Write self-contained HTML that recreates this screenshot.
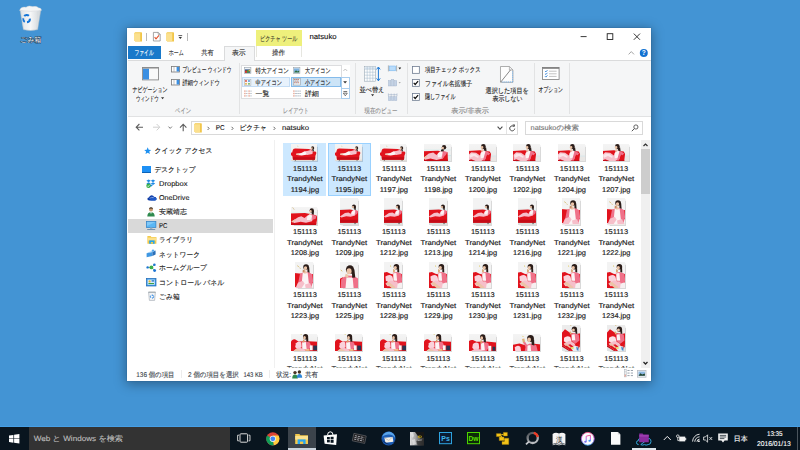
<!DOCTYPE html>
<html lang="ja">
<head>
<meta charset="utf-8">
<title>natsuko</title>
<style>html,body{margin:0;padding:0}
body{width:800px;height:450px;overflow:hidden;position:relative;background:#4394D4;font-family:"Liberation Sans",sans-serif}
div,svg{position:absolute;display:block}
svg{overflow:visible}
#tx text{font-family:"Liberation Sans",sans-serif;white-space:pre;text-rendering:geometricPrecision}
</style>
</head>
<body>
<svg width="0" height="0" style="left:0;top:0"><defs>
<linearGradient id="wl" x1="0" y1="0" x2="0" y2="1"><stop offset="0" stop-color="#f5f5f5"/><stop offset="1" stop-color="#e9e8e7"/></linearGradient>
<symbol id="tA" viewBox="0 0 26.6 17"><rect width="26.6" height="17" fill="url(#wl)"/><rect y="15" width="26.6" height="2" fill="#e2ddd7"/><path d="M7 2.4 L7.6 3.6" stroke="#d9c58a" stroke-width=".5"/>
<path d="M.2 10.2 Q0 8.4 2 8.6 L2.6 6.6 Q2.8 4.8 5.2 5 L17.4 5.4 Q20.4 5.8 21.6 7.6 L23.2 7.6 Q25 7.4 24.6 9.4 L23.8 11.6 L23.4 15.2 L2.8 15.2 L2.4 12.2Z" fill="#e1131d"/>
<path d="M2.6 13 L23.6 13 L23.4 15.2 L2.8 15.2Z" fill="#c50c17"/><path d="M5 15.2 L5 16 M21.6 15.2 L21.6 16" stroke="#4a3a30" stroke-width=".8"/>
<path d="M5.8 9.8 L10.6 9 L13.6 7.4 L16 7.6 L16.6 10.4 L11 11.2 L6.4 10.8Z" fill="#fbf4f5"/><path d="M14.4 7.6 L19.4 6.4 L21.4 7.4 L21 10 L16 10.8Z" fill="#f6bfca"/>
<path d="M5.6 9.8 L8.4 9.6 L8.6 10.6 L6 10.8Z" fill="#ecc4a8"/>
<circle cx="21.2" cy="4.5" r="1.5" fill="#2b1d19"/><circle cx="20.5" cy="4.9" r=".95" fill="#ecc4a8"/><path d="M21.4 4.2 L22.6 7.6 L21 7.2Z" fill="#2b1d19"/></symbol>

<symbol id="tB" viewBox="0 0 26.6 17"><rect width="26.6" height="17" fill="url(#wl)"/><rect y="5.9" width="26.6" height=".8" fill="#d9eeee"/><rect x="22.8" y="11" width="3.8" height="6" fill="#e6eaea"/><rect x="22.8" y="11" width="3.8" height=".8" fill="#cfe4e6"/>
<path d="M0 7.4 L14 6.9 L23 8.4 L23.4 16.6 L0 16.6Z" fill="#e1131d"/><path d="M0 15.2 L23.2 15.2 L23.2 16.6 L0 16.6Z" fill="#c50c17"/>
<path d="M.6 13.4 L5.4 9.4 L9.6 8.6 L12.6 10.8 L15.6 7.8 L19.6 7 L21.4 9 L18.6 14 L12.6 15.4 L7 14 L2 15.2Z" fill="#f6bfca"/><path d="M14.2 9.2 L17.2 7.2 L18.8 8.8 L17 13 L13.8 12.8Z" fill="#fbf4f5"/>
<path d="M18.6 7.2 L22.8 8.2 L21.6 10.6 L17.6 14.4Z" fill="#ef7189"/>
<path d="M.4 13.4 L3.4 11.4 L4.2 12.4 L1.2 14.6Z" fill="#ecc4a8"/>
<circle cx="19.7" cy="3.8" r="2.05" fill="#2b1d19"/><circle cx="18.5" cy="4.5" r="1.15" fill="#ecc4a8"/><path d="M16.8 6 L19 5.4 L19.6 7.4 L17 7.6Z" fill="#2b1d19"/></symbol>

<symbol id="tC" viewBox="0 0 26.6 17"><rect width="26.6" height="17" fill="url(#wl)"/><rect x="20" y="11.4" width="6.6" height="1" fill="#d6e8ea"/><rect x="20" y="12.4" width="6.6" height="4.6" fill="#e9e7e5"/>
<path d="M0 7.2 L11 6.6 L20.4 7.8 L21.6 10 L20.8 16.6 L0 16.6Z" fill="#e1131d"/><path d="M0 15.4 L20.8 15.4 L20.8 16.6 L0 16.6Z" fill="#c50c17"/>
<path d="M.4 10.6 L3 8.4 L7.6 8.8 L11.2 11.2 L12.4 8 L15.6 6.6 L17.8 8.6 L16.2 14.4 L12 16.5 L7 16.3 L3 14.6 L.6 15.6Z" fill="#f6bfca"/><path d="M1 11.6 L3.4 9.6 L7 10 L10.4 12.6 L9 13.4 L5.6 11.8 L2 13.4Z" fill="#fbe4e9"/>
<path d="M11.8 9.4 L15 6.8 L16.8 8.4 L15.2 13.4 L12 13.8Z" fill="#fbf4f5"/><path d="M16.6 6.8 L20.8 9.4 L19.2 11 L17.8 10.4 L15.8 15.8 L14 15.8Z" fill="#ef7189"/>
<circle cx="14.4" cy="3.2" r="2.2" fill="#2b1d19"/><circle cx="13.2" cy="4" r="1.25" fill="#ecc4a8"/><path d="M14.6 3.8 L17 4 L17.4 7.4 L15 6.8Z" fill="#2b1d19"/><path d="M12.4 5.8 L14 5.4 L14.2 7.8 L12.6 8Z" fill="#ecc4a8"/></symbol>

<symbol id="tD" viewBox="0 0 26.6 17.6"><rect width="26.6" height="17.6" fill="url(#wl)"/><path d="M2.4 1.2 L4 3.4" stroke="#cdb47c" stroke-width=".6"/><rect y="5.8" width="26.6" height=".7" fill="#ddf0f0"/>
<path d="M.2 6.8 L14 6.4 L22.6 8 L26.2 9.4 L25.4 12 L24.4 17.3 L.2 17.3Z" fill="#e1131d"/><path d="M.2 15.8 L24.8 15.8 L24.4 17.3 L.2 17.3Z" fill="#c50c17"/>
<path d="M1.6 14 L7.6 10.2 L10.6 9.2 L13.6 10.8 L17 8.2 L20.6 7.4 L22.6 9.4 L20.6 13.8 L15 15.2 L10 14.2 L4 15.4Z" fill="#f6bfca"/><path d="M16.2 9.4 L19.4 7.6 L20.6 9.2 L19 12.8 L15.8 12.8Z" fill="#fbf4f5"/>
<path d="M20.6 7.6 L24.8 9 L24 11.6 L20.8 12.8Z" fill="#ef7189"/><path d="M1.2 14 L4.6 12 L5.4 13 L2.2 15Z" fill="#ecc4a8"/>
<circle cx="20.4" cy="4" r="2" fill="#2b1d19"/><circle cx="19.3" cy="4.7" r="1.15" fill="#ecc4a8"/><path d="M20.4 4.4 L22.4 4.6 L22.2 8 L20.4 7.4Z" fill="#2b1d19"/><path d="M17.6 6.6 L18.8 6.2 L19 8 L17.8 8.2Z" fill="#ecc4a8"/></symbol>

<symbol id="tE" viewBox="0 0 18.2 26.4"><rect width="18.2" height="26.4" fill="#f3f3f3"/><rect y="11" width="18.2" height=".8" fill="#dcefef"/><rect y="23.6" width="18.2" height="2.8" fill="#dcdedb"/>
<path d="M0 12.2 L10 11.6 L17.6 13 L17.8 16.6 L17 24 L.2 24Z" fill="#e1131d"/><path d="M.2 21.4 L17.2 21.4 L17 24 L.2 24Z" fill="#c50c17"/><path d="M14.6 24 L14.6 25.4" stroke="#333" stroke-width=".8"/>
<path d="M.8 18.2 L5.4 15 L8.6 14.6 L10.6 15.8 L12 12.8 L14.4 11.8 L15.8 13.4 L14.6 17.4 L10.6 18.6 L6.6 18 L2.2 19.2Z" fill="#f6bfca"/><path d="M11.6 13.8 L13.8 12.2 L14.8 13.4 L13.8 16.4 L11.4 16.4Z" fill="#fbf4f5"/>
<path d="M14.8 12.2 L17.4 13.6 L16.4 16 L14.8 16.8Z" fill="#ef7189"/>
<circle cx="13.6" cy="8.8" r="1.8" fill="#2b1d19"/><circle cx="12.7" cy="9.4" r="1.05" fill="#ecc4a8"/><path d="M13.8 9 L15.4 9.2 L15.2 12.2 L13.8 11.8Z" fill="#2b1d19"/></symbol>

<symbol id="tF" viewBox="0 0 18.2 26.4"><rect width="18.2" height="26.4" fill="#f3f3f3"/><path d="M3 4.4 L4.4 5.4 M5 6.4 L6 7" stroke="#cfae52" stroke-width=".7"/>
<path d="M0 11.2 L7.4 12 L7.4 24 L0 24.6Z" fill="#e1131d"/><path d="M12 13.4 L18.2 12 L18.2 20.4 L12 22Z" fill="#e1131d"/><rect y="24.4" width="18.2" height="2" fill="#f0e6e6"/>
<path d="M5.4 12.2 L8.8 10.2 L13 10.4 L16.6 12.4 L17.4 19 L15.6 25.4 L2.4 25.4 L4.2 18.6Z" fill="#ef7189"/>
<path d="M8 10.8 L12.4 10.8 L13.4 20 L14.2 25.4 L6 25.4 L7.2 19Z" fill="#fbf4f5"/><path d="M1.4 25.4 L3.6 20.4 L8 18.4 L9.6 21 L7 25.4Z" fill="#f6bfca"/><path d="M10 22 L14.6 20.6 L16.4 25.4 L10.6 25.4Z" fill="#f6bfca"/>
<path d="M8.8 9 L11.4 9 L11.4 11.6 L9 11.6Z" fill="#ecc4a8"/><circle cx="11" cy="5.6" r="2.6" fill="#2b1d19"/><ellipse cx="10.5" cy="6.6" rx="1.5" ry="1.8" fill="#ecc4a8"/><path d="M12.2 5.2 L13.8 5.8 L14.2 11 L12.2 10.2Z" fill="#2b1d19"/><path d="M8 8 L9.8 8.6 L9.4 10.8 L7.8 10.2Z" fill="#c58d62"/></symbol>

<symbol id="tG" viewBox="0 0 18.2 26.4"><rect width="18.2" height="26.4" fill="#f3f3f3"/><path d="M1.6 8.4 L3 9.6" stroke="#cfae52" stroke-width=".7"/>
<path d="M0 17 L4 15 L4 26.4 L0 26.4Z" fill="#e1131d"/>
<path d="M2 17 L6.6 13.6 L13 13.8 L17.4 16.4 L18.2 26.4 L1.4 26.4Z" fill="#ef7189"/><path d="M6.8 15.4 L12.4 15.4 L13.4 26.4 L5.8 26.4Z" fill="#fbf4f5"/>
<ellipse cx="10" cy="8" rx="3.7" ry="4.1" fill="#2b1d19"/><ellipse cx="9.2" cy="9.6" rx="2.3" ry="2.7" fill="#ecc4a8"/><path d="M11.6 7 L14 8 L14.8 15.4 L12 15.8Z" fill="#2b1d19"/><path d="M6 12 L9 13 L8 16 L5.4 14.8Z" fill="#ecc4a8"/></symbol>

<symbol id="tH" viewBox="0 0 18.2 26.4"><rect width="18.2" height="26.4" fill="#f3f3f3"/><path d="M6.4 4.4 L7.4 5.2" stroke="#dcc24a" stroke-width=".8"/>
<path d="M0 11 L3.6 10.2 L6.8 12 L12 13 L18.2 12 L18.2 21 L14 26.4 L0 26.4Z" fill="#e1131d"/>
<path d="M8.8 11 L12.6 10.2 L16.6 11.8 L17.6 18.4 L15.6 22 L10.8 19.6Z" fill="#ef7189"/><path d="M9.4 11.4 L12.2 11.2 L12.8 18.6 L9.4 18.6Z" fill="#fbf4f5"/>
<path d="M2.2 14.6 Q5.6 11.6 8.6 14.4 L9.6 19 L6.6 20.6 L2.6 18.6Z" fill="#fad2db"/>
<path d="M2.2 21 L7 18.2 L12.6 19.4 L14.8 23 L12.4 26.2 L8.4 23.4 L4 23.6Z" fill="#f6bfca"/><path d="M2.6 20.8 L5.2 19.4 L11.2 24.4 L11 26.4 L8.8 26.2Z" fill="#ecc4a8"/>
<path d="M13.4 21 L18.2 19.6 L18.2 26.4 L12.6 26.4Z" fill="#f6f0f1"/>
<circle cx="12.2" cy="5.4" r="2.5" fill="#2b1d19"/><ellipse cx="11.2" cy="6.3" rx="1.4" ry="1.7" fill="#ecc4a8"/><path d="M13 5 L14.6 5.6 L14.8 10.8 L13 10.2Z" fill="#2b1d19"/><path d="M9.2 7.6 L10.8 8.4 L10.6 10.8 L9.2 10.4Z" fill="#d9a066"/></symbol>

<symbol id="tI" viewBox="0 0 26.6 17"><rect width="26.6" height="17" fill="url(#wl)"/><path d="M10.2 1 L10.8 1.8" stroke="#dcc24a" stroke-width=".6"/>
<path d="M.4 10 Q.8 5.6 4.6 5.6 L8 7.6 L17 7.4 L26.4 8 L26.4 16.6 L.4 16.6Z" fill="#e1131d"/>
<path d="M5.6 9.2 Q8 6.6 10.6 8.6 L11 13 L7 14.8 L4.8 12.6Z" fill="#fad2db"/>
<path d="M11 8.4 L14.4 7.4 L18.6 8.6 L20 12 L17 15.6 L11.4 15.6Z" fill="#ef7189"/><path d="M11.4 8.6 L14.8 8.2 L15.6 14.6 L11.6 14.8Z" fill="#fbf4f5"/>
<path d="M3 16.4 L7.6 13.2 L12 14 L15 15.6 L13.6 16.8 L3 16.8Z" fill="#f6bfca"/><path d="M3.4 15.8 L6.4 14 L11.6 16.8 L5 16.8Z" fill="#ecc4a8"/>
<rect x="21.8" y="11.4" width="3.6" height="4.2" fill="#2a3652"/><rect x="18.6" y="11.2" width="2.6" height="4.4" fill="#f6f6f6"/><path d="M14.6 14.8 L18.4 14.8 L18.4 16 L14.6 16Z" fill="#f0d890"/>
<circle cx="14.6" cy="3.4" r="2.4" fill="#2b1d19"/><ellipse cx="13.6" cy="4.2" rx="1.25" ry="1.55" fill="#ecc4a8"/><path d="M15.2 3.2 L17 3.8 L17.2 8 L15.2 7.6Z" fill="#2b1d19"/><path d="M12.2 5.8 L13.6 6.4 L13.4 8.6 L12 8.4Z" fill="#d9a066"/></symbol>

<symbol id="tI2" viewBox="0 0 26.6 17"><rect width="26.6" height="17" fill="url(#wl)"/>
<path d="M0 9 Q.8 6 4.6 6.4 L8 8 L17 7.6 L26.6 8.6 L26.6 16.6 L0 16.6Z" fill="#e1131d"/>
<path d="M4.6 10 Q7.4 7.4 10 9.6 L10.6 14 L6.4 15.8 L4 13.4Z" fill="#fad2db"/>
<path d="M11.6 9 L15 7.8 L19.2 9.4 L19.8 13 L17 16.6 L11.4 16.6Z" fill="#ef7189"/><path d="M12.2 9.4 L15 8.8 L15.8 15.6 L12.4 15.8Z" fill="#fbf4f5"/>
<path d="M2 16.8 L7 14 L12 15 L14 16.8Z" fill="#f6bfca"/>
<rect x="19" y="11.6" width="2.8" height="4.6" fill="#f6f6f6"/><rect x="23" y="12.4" width="2.6" height="3.6" fill="#2a3652"/>
<circle cx="13.8" cy="3.6" r="2.5" fill="#2b1d19"/><ellipse cx="12.9" cy="4.6" rx="1.3" ry="1.6" fill="#ecc4a8"/><path d="M14.6 3.6 L16.6 4.4 L16.8 8.6 L14.8 8.2Z" fill="#2b1d19"/><path d="M11.8 6.4 L13.2 7 L13 9.4 L11.6 9.2Z" fill="#d9a066"/></symbol>

<symbol id="tI3" viewBox="0 0 26.6 17"><rect width="26.6" height="17" fill="url(#wl)"/><path d="M8.8 2.6 L9.8 3.6" stroke="#dcc24a" stroke-width=".7"/>
<path d="M0 10.6 L6 9.6 L14 11.8 L20 9.8 L26.6 10.4 L26.6 16.6 L0 16.6Z" fill="#e1131d"/>
<path d="M1.6 13 Q4.4 10.2 7 12.6 L7.6 16.6 L2.2 16.6Z" fill="#fad2db"/>
<path d="M12 11 L16 9.4 L21.8 11 L23.2 16.6 L11 16.6Z" fill="#ef7189"/><path d="M13.6 11.2 L16.4 10.8 L17 16.6 L13.4 16.6Z" fill="#fbf4f5"/>
<circle cx="16.4" cy="5" r="3.2" fill="#2b1d19"/><ellipse cx="15.1" cy="6.2" rx="1.75" ry="2.15" fill="#ecc4a8"/><path d="M17.4 5 L19.8 6 L20 11.4 L17.4 10.6Z" fill="#2b1d19"/><path d="M8.4 5.4 L10.6 5 L11.4 8.4 L9.4 9Z" fill="#dfb07a"/><path d="M9.4 8.6 L11.4 8.2 L13.6 11.6 L12 12.6Z" fill="#ef7189"/></symbol>

<symbol id="tJ" viewBox="0 0 18.2 26.4"><rect width="18.2" height="26.4" fill="#ececec"/><rect y="19" width="18.2" height="7.4" fill="#dfe3e4"/><path d="M8 0 L9 1.6" stroke="#cfae52" stroke-width=".8"/>
<path d="M.2 19.2 L.2 9 L3.6 4.8 L8.6 8.4 L14 9.4 L17.8 8.6 L17.8 18 L14.6 24 L9.6 25.8Z" fill="#e1131d"/><path d="M.2 19.2 L9.6 25.8 L14.6 24 L17.8 18 L17.8 19.6 L14.8 25.2 L9.2 26.4 L.2 20.8Z" fill="#c50c17"/>
<path d="M9.2 9.6 L12.6 8.4 L16.2 10 L16.8 15.4 L13 18.4 L9.4 15.8Z" fill="#ef7189"/><path d="M9.8 10 L12.4 9.6 L13 15.2 L10 15.2Z" fill="#fbf4f5"/>
<path d="M2.8 12.8 Q5.8 10.2 8.6 12.4 L9.6 16.8 L5.8 18.6 L2.6 16.2Z" fill="#fbe3e8"/>
<path d="M2.4 18.4 L7.6 15.8 L12 17.8 L13.4 20.4 L10.6 20.6 L8.4 19 L4 20.4Z" fill="#f6bfca"/><path d="M2.6 18.6 L4.6 18 L9 21.6 L8.4 22.6Z" fill="#ecc4a8"/>
<path d="M9 22.4 L12 20.4 L15.6 21 L16.2 25.6 L11.2 25.8Z" fill="#e7eef2"/><path d="M8.6 22 L11.4 21.4 L11.8 23 L9.4 23.6Z" fill="#e8dc70"/><path d="M13.8 21.6 L15.6 22 L16 25 L14.4 24.6Z" fill="#4a86c8"/>
<circle cx="12.2" cy="4.8" r="2.4" fill="#2b1d19"/><ellipse cx="11.3" cy="5.6" rx="1.3" ry="1.5" fill="#ecc4a8"/><path d="M13 4.6 L14.6 5.2 L14.8 9.4 L13.2 8.8Z" fill="#2b1d19"/><path d="M7.6 7.2 L9 7 L9.8 9.4 L8.4 9.8Z" fill="#dfb07a"/></symbol>
</defs></svg>
<svg style="left:18px;top:4px" width="26" height="28" viewBox="0 0 26 28" >
<defs><linearGradient id="rb" x1="0" x2="1"><stop offset="0" stop-color="#dfe3e6"/><stop offset=".5" stop-color="#f6f7f8"/><stop offset="1" stop-color="#cfd4d8"/></linearGradient></defs>
<path d="M2.2 6.2 L22.8 6.2 L19.6 25.6 Q12.5 27.4 5.4 25.6 Z" fill="url(#rb)" stroke="#b9c0c6" stroke-width=".5"/>
<path d="M1.6 6.4 Q3 2.4 8 3.2 Q11 1 14.5 2.6 Q19 1.6 20.5 3.8 Q23.5 4 23.4 6.4 Q12.5 8.4 1.6 6.4Z" fill="#f4f5f6" stroke="#c9cdd1" stroke-width=".4"/>
<g fill="none" stroke="#1374d8" stroke-width="2"><path d="M6.2 12 A3.3 3.3 0 0 1 10.9 11.8"/><path d="M11.9 14.6 A3.3 3.3 0 0 1 9 18.2"/><path d="M6.8 17.8 A3.3 3.3 0 0 1 5.2 14.2"/></g><path d="M3.4 7.6 L5.6 24.6 M19.8 7.6 L18.6 24.8" stroke="#d5dade" stroke-width=".5" fill="none"/>
</svg>
<div style="left:127px;top:28px;width:524px;height:353.3px;background:#fff;box-shadow:0 0 0 .5px rgba(40,90,140,.42),0 2px 11px 1px rgba(0,0,0,.35)"></div>
<svg style="left:133.5px;top:32px" width="8" height="9.4" viewBox="0 0 7.6 9.2" preserveAspectRatio="none"><path d="M1 .2 L6.9 .2 Q7.6 .2 7.6 .9 L7.6 9.2 L1 9.2Z" fill="#f1c548"/><path d="M0 1.3 Q0 .7 .6 .7 L5.9 .7 L5.9 8.7 L0 8.7Z" fill="#fbe08e"/><path d="M0 1.3 Q0 .7 .6 .7 L5.9 .7 L5.9 1.5 L0 1.5Z" fill="#f7d572"/></svg>
<div style="left:146px;top:33px;width:0.8px;height:7.5px;background:#b9b9b9"></div>
<svg style="left:152.7px;top:32.3px" width="7.8" height="9.4" viewBox="0 0 7.8 9.4" ><path d="M.4 .4 L5.2 .4 L7.2 2.4 L7.2 9 L.4 9Z" fill="#fff" stroke="#7f7f7f" stroke-width=".7"/><path d="M5.2 .4 L5.2 2.4 L7.2 2.4" fill="none" stroke="#7f7f7f" stroke-width=".6"/><path d="M1.6 5.2 L3 6.8 L6 3.4" fill="none" stroke="#e5532d" stroke-width="1.1"/></svg>
<svg style="left:165.6px;top:32px" width="8" height="9.4" viewBox="0 0 7.6 9.2" preserveAspectRatio="none"><path d="M1 .2 L6.9 .2 Q7.6 .2 7.6 .9 L7.6 9.2 L1 9.2Z" fill="#f1c548"/><path d="M0 1.3 Q0 .7 .6 .7 L5.9 .7 L5.9 8.7 L0 8.7Z" fill="#fbe08e"/><path d="M0 1.3 Q0 .7 .6 .7 L5.9 .7 L5.9 1.5 L0 1.5Z" fill="#f7d572"/></svg>
<svg style="left:178px;top:35.4px" width="4.6" height="4.4" viewBox="0 0 4.6 4.4" ><path d="M.4 .6 L4.2 .6" stroke="#333" stroke-width=".8"/><path d="M.6 2 L4 2 L2.3 3.9Z" fill="#333"/></svg>
<div style="left:187.4px;top:33px;width:0.8px;height:7.5px;background:#b9b9b9"></div>
<svg style="left:578px;top:31px" width="66" height="12" viewBox="0 0 66 12" ><path d="M2.6 5.6 L8.6 5.6" stroke="#222" stroke-width=".9"/><rect x="29.2" y="2.7" width="5.6" height="5.8" fill="none" stroke="#222" stroke-width=".9"/><path d="M55.8 2.6 L62 8.8 M62 2.6 L55.8 8.8" stroke="#222" stroke-width=".9"/></svg>
<svg style="left:626px;top:48px" width="24" height="10" viewBox="0 0 24 10" ><path d="M2.6 6.4 L5.3 3.6 L8 6.4" fill="none" stroke="#9a9a9a" stroke-width=".9"/><circle cx="17.8" cy="5" r="4" fill="#1272d2"/><text x="17.8" y="7.4" font-size="6.6" font-weight="bold" fill="#fff" text-anchor="middle">?</text></svg>
<div style="left:256px;top:30px;width:46px;height:16px;background:#eef07c"></div>
<div style="left:128px;top:46px;width:32.6px;height:13.4px;background:#1979ca"></div>
<div style="left:127.6px;top:60px;width:523px;height:56.7px;background:#f5f6f7;border-top:.8px solid #dadbdc;border-bottom:.8px solid #e1e2e3;box-sizing:border-box"></div>
<div style="left:223.6px;top:46.2px;width:31px;height:14.6px;background:#f5f6f7;border:.8px solid #dadbdc;border-bottom:none;box-sizing:border-box"></div>
<div style="left:256px;top:46px;width:46px;height:11px;border-left:.8px solid #e6e6e0;border-right:.8px solid #e6e6e0;box-sizing:border-box"></div>
<svg style="left:141.6px;top:66.8px" width="17" height="13.6" viewBox="0 0 17 13.6" ><rect x=".5" y=".5" width="16" height="12.4" fill="#f9f9f9" stroke="#8a8a8a" stroke-width=".9"/><rect x="1" y="1.6" width="6" height="10.8" fill="#3b8fe2"/><rect x=".5" y=".3" width="16" height="1.2" fill="#8a8a8a"/></svg>
<svg style="left:161px;top:97.4px" width="3.4" height="2.4" viewBox="0 0 3.4 2.4" ><path d="M0 .2 L3.2 .2 L1.6 2.2Z" fill="#333"/></svg>
<svg style="left:171.2px;top:66.4px" width="9" height="6.4" viewBox="0 0 9 6.4" ><rect x=".4" y=".4" width="8.2" height="5.6" fill="#fff" stroke="#777" stroke-width=".8"/><rect x="5.6" y=".9" width="2.6" height="4.6" fill="#3b8fe2"/><path d="M3 .6 L3 5.8" stroke="#888" stroke-width=".5"/></svg>
<svg style="left:171.2px;top:79.2px" width="9" height="6.4" viewBox="0 0 9 6.4" ><rect x=".4" y=".4" width="8.2" height="5.6" fill="#fff" stroke="#777" stroke-width=".8"/><rect x="5.6" y=".9" width="2.6" height="4.6" fill="#3b8fe2"/><path d="M3 .6 L3 5.8" stroke="#888" stroke-width=".5"/></svg>
<div style="left:238.6px;top:62.5px;width:0.8px;height:51.5px;background:#e2e3e4"></div>
<div style="left:241.2px;top:64.8px;width:108.4px;height:34.6px;background:#fff;border:.8px solid #dcdddf;box-sizing:border-box"></div>
<div style="left:242.2px;top:76.6px;width:48px;height:10.8px;background:#e8f2fc;border:.7px solid #c4ddf5;box-sizing:border-box"></div>
<div style="left:291.2px;top:76.6px;width:49.6px;height:10.8px;background:#cce4f7;border:.7px solid #84bbeb;box-sizing:border-box"></div>
<svg style="left:244.4px;top:66.8px" width="7.2" height="7" viewBox="0 0 7.2 7" ><rect x=".3" y=".3" width="6.6" height="6.2" fill="#eef3f7" stroke="#9aa3ab" stroke-width=".6"/><rect x="1" y="2.4" width="5.2" height="3.4" fill="#2c4f86"/><rect x="1" y="3.6" width="2" height="2.2" fill="#d23b2a"/><rect x="3" y="3.2" width="1.6" height="2.6" fill="#4c9a3a"/><rect x="4.6" y="2.8" width="1.6" height="1.6" fill="#e8b530"/></svg>
<svg style="left:293px;top:66.8px" width="7.2" height="7" viewBox="0 0 7.2 7" ><rect x=".3" y=".3" width="6.6" height="6.2" fill="#eef3f7" stroke="#9aa3ab" stroke-width=".6"/><rect x="1" y="1.4" width="5.2" height="4" fill="#7fb2e0"/><path d="M1 5.4 L3 3.2 L4.4 4.4 L6.2 3.4 L6.2 5.4Z" fill="#2f6b3c"/></svg>
<svg style="left:244.4px;top:78.6px" width="7.2" height="7" viewBox="0 0 7.2 7" ><rect x=".3" y=".3" width="6.6" height="6.2" fill="#f4f6f8" stroke="#aab3bb" stroke-width=".6"/><circle cx="2" cy="2" r=".9" fill="#d8442c"/><circle cx="5" cy="2" r=".9" fill="#4b8fd8"/><circle cx="2" cy="4.8" r=".9" fill="#e3a52a"/><circle cx="5" cy="4.8" r=".9" fill="#5aa845"/></svg>
<svg style="left:293px;top:78.4px" width="7.6" height="7.4" viewBox="0 0 7.6 7.4" ><rect x=".3" y=".3" width="7" height="6.8" fill="#eceff2" stroke="#9aa3ab" stroke-width=".6"/><g fill="#d9846f"><rect x="1" y="1" width="1" height="1"/><rect x="3" y="1" width="1" height="1"/><rect x="5" y="1" width="1" height="1"/><rect x="2" y="2.6" width="1" height="1"/><rect x="4" y="2.6" width="1" height="1"/><rect x="1" y="4.2" width="1" height="1"/><rect x="3" y="4.2" width="1" height="1"/><rect x="5" y="4.2" width="1" height="1"/></g><g fill="#9fb4c8"><rect x="2" y="1" width="1" height="1"/><rect x="4" y="1" width="1" height="1"/><rect x="1" y="2.6" width="1" height="1"/><rect x="3" y="2.6" width="1" height="1"/><rect x="5" y="2.6" width="1" height="1"/><rect x="2" y="4.2" width="1" height="1"/><rect x="4" y="4.2" width="1" height="1"/></g></svg>
<svg style="left:244.2px;top:90px" width="8" height="7" viewBox="0 0 8 7" ><g fill="#e7a391"><rect x=".2" y=".4" width="1.4" height="1.4"/><rect x=".2" y="2.8" width="1.4" height="1.4"/><rect x=".2" y="5.2" width="1.4" height="1.4"/></g><g fill="#a9b4bf"><rect x="2.2" y=".6" width="1.2" height="1"/><rect x="2.2" y="3" width="1.2" height="1"/><rect x="2.2" y="5.4" width="1.2" height="1"/><rect x="4.4" y=".4" width="1.4" height="1.4" fill="#e7a391"/><rect x="4.4" y="2.8" width="1.4" height="1.4" fill="#e7a391"/><rect x="4.4" y="5.2" width="1.4" height="1.4" fill="#e7a391"/><rect x="6.4" y=".6" width="1.2" height="1"/><rect x="6.4" y="3" width="1.2" height="1"/><rect x="6.4" y="5.4" width="1.2" height="1"/></g></svg>
<svg style="left:292.8px;top:90px" width="8" height="7" viewBox="0 0 8 7" ><g fill="#e7a391"><rect x=".2" y=".4" width="1.4" height="1.4"/><rect x=".2" y="2.8" width="1.4" height="1.4"/><rect x=".2" y="5.2" width="1.4" height="1.4"/></g><g fill="#a9b4bf"><rect x="2.2" y=".6" width="1.6" height="1"/><rect x="2.2" y="3" width="1.6" height="1"/><rect x="2.2" y="5.4" width="1.6" height="1"/><rect x="4.4" y=".6" width="1.4" height="1"/><rect x="4.4" y="3" width="1.4" height="1"/><rect x="4.4" y="5.4" width="1.4" height="1"/><rect x="6.4" y=".6" width="1.4" height="1"/><rect x="6.4" y="3" width="1.4" height="1"/><rect x="6.4" y="5.4" width="1.4" height="1"/></g></svg>
<div style="left:341.2px;top:64.8px;width:8.4px;height:34.6px;background:#fff;border-left:.8px solid #dcdddf;box-sizing:border-box"></div>
<div style="left:341.2px;top:76.6px;width:8.4px;height:22.8px;border:.8px solid #a9cdee;box-sizing:border-box"></div>
<div style="left:341.2px;top:87.8px;width:8.4px;height:0.8px;background:#a9cdee"></div>
<svg style="left:343.2px;top:68.4px" width="4.6" height="4" viewBox="0 0 4.6 4" ><path d="M.4 3 L2.3 1 L4.2 3" fill="none" stroke="#b5b5b5" stroke-width=".8"/></svg>
<svg style="left:343.4px;top:80.8px" width="4.2" height="3" viewBox="0 0 4.2 3" ><path d="M.2 .3 L4 .3 L2.1 2.6Z" fill="#333"/></svg>
<svg style="left:343.2px;top:90.6px" width="4.6" height="6" viewBox="0 0 4.6 6" ><path d="M.4 .6 L4.2 .6" stroke="#444" stroke-width=".8"/><path d="M.3 2.2 L4.3 2.2 L2.3 4.8Z" fill="none" stroke="#444" stroke-width=".7"/></svg>
<div style="left:354.6px;top:62.5px;width:0.8px;height:51.5px;background:#e2e3e4"></div>
<svg style="left:363.6px;top:65.8px" width="17" height="16" viewBox="0 0 17 16" ><rect x=".4" y=".4" width="11.2" height="14.8" fill="#fdfdfd" stroke="#9aa8b4" stroke-width=".6"/><rect x=".7" y=".7" width="10.6" height="2.3" fill="#dfe9f2"/><path d="M.4 3.2 L11.6 3.2" stroke="#9fb6c9" stroke-width=".5"/><path d="M.4 6.2 L11.6 6.2" stroke="#9fb6c9" stroke-width=".5"/><path d="M.4 9.2 L11.6 9.2" stroke="#9fb6c9" stroke-width=".5"/><path d="M.4 12.2 L11.6 12.2" stroke="#9fb6c9" stroke-width=".5"/><path d="M3.2 .4 L3.2 15.2" stroke="#9fb6c9" stroke-width=".5"/><path d="M6 .4 L6 15.2" stroke="#9fb6c9" stroke-width=".5"/><path d="M8.8 .4 L8.8 15.2" stroke="#9fb6c9" stroke-width=".5"/><path d="M14.4 1.2 L14.4 14.6" stroke="#1f7ad6" stroke-width="1"/><path d="M12.6 3.4 L14.4 1 L16.2 3.4 M12.6 12.4 L14.4 14.8 L16.2 12.4" fill="none" stroke="#1f7ad6" stroke-width="1"/></svg>
<svg style="left:370.6px;top:94px" width="3.4" height="2.4" viewBox="0 0 3.4 2.4" ><path d="M0 .2 L3.2 .2 L1.6 2.2Z" fill="#333"/></svg>
<svg style="left:388px;top:65.4px" width="14" height="7" viewBox="0 0 14 7" ><path d="M.4 .4 L.4 6.4 M8.6 .4 L8.6 6.4" stroke="#8c959d" stroke-width=".7"/><rect x="1.4" y="1" width="6.2" height="4.8" fill="#b9dcfb" stroke="#6fb1ee" stroke-width=".5"/><path d="M10.4 2.6 L13.2 2.6 L11.8 4.4Z" fill="#222"/></svg>
<svg style="left:388px;top:79.4px" width="14" height="7.4" viewBox="0 0 14 7.4" ><g fill="#c4d3e6" stroke="#9fb0c8" stroke-width=".4"><rect x=".4" y="1.6" width="2.4" height="5.4"/><rect x="3.4" y=".4" width="2.4" height="6.6"/><rect x="6.4" y="1.6" width="2.4" height="5.4"/></g><path d="M10.6 3 L12.8 3 L11.7 4.4Z" fill="#aaa"/></svg>
<svg style="left:388px;top:92.6px" width="9.6" height="8" viewBox="0 0 9.6 8" ><path d="M.4 .4 L.4 3 M9 .4 L9 3 M.4 1.7 L9 1.7 M3.2 .6 L3.2 2.8 M6.2 .6 L6.2 2.8" stroke="#9fb0c8" stroke-width=".6" fill="none"/><g fill="#c4d3e6" stroke="#9fb0c8" stroke-width=".4"><rect x=".4" y="3.8" width="2.5" height="3.8"/><rect x="3.4" y="3.8" width="2.5" height="3.8"/><rect x="6.4" y="3.8" width="2.5" height="3.8"/></g></svg>
<div style="left:407.2px;top:62.5px;width:0.8px;height:51.5px;background:#e2e3e4"></div>
<svg style="left:412.2px;top:65.7px" width="7.8" height="7.8" viewBox="0 0 7.8 7.8" ><rect x=".45" y=".45" width="6.9" height="6.9" fill="#fff" stroke="#6f7c91" stroke-width=".8"/></svg>
<svg style="left:412.2px;top:79.2px" width="7.8" height="7.8" viewBox="0 0 7.8 7.8" ><rect x=".45" y=".45" width="6.9" height="6.9" fill="#fff" stroke="#6f7c91" stroke-width=".8"/><path d="M1.7 3.9 L3.2 5.5 L6.1 2.1" fill="none" stroke="#111" stroke-width="1.2"/></svg>
<svg style="left:412.2px;top:92.8px" width="7.8" height="7.8" viewBox="0 0 7.8 7.8" ><rect x=".45" y=".45" width="6.9" height="6.9" fill="#fff" stroke="#6f7c91" stroke-width=".8"/><path d="M1.7 3.9 L3.2 5.5 L6.1 2.1" fill="none" stroke="#111" stroke-width="1.2"/></svg>
<svg style="left:500.4px;top:65.8px" width="13.8" height="17" viewBox="0 0 13.8 17" ><path d="M.5 .5 L9.4 .5 L12.9 4 L12.9 16.3 L.5 16.3Z" fill="#fdfdfd" stroke="#8d8d8d" stroke-width=".7"/><path d="M9.4 .5 L9.4 4 L12.9 4" fill="none" stroke="#8d8d8d" stroke-width=".6"/><path d="M.8 16 L10.6 3.8" stroke="#555" stroke-width=".7"/><path d="M12.6 5.4 L12.6 16 M2.4 16 L12.6 16" stroke="#6cb4f5" stroke-width=".9" stroke-dasharray="1 .9"/></svg>
<div style="left:534.2px;top:62.5px;width:0.8px;height:51.5px;background:#e2e3e4"></div>
<svg style="left:542.4px;top:67px" width="17.6" height="13" viewBox="0 0 17.6 13" ><rect x=".5" y=".5" width="16.6" height="12" fill="#fff" stroke="#7d7d7d" stroke-width=".8"/><rect x=".5" y=".3" width="16.6" height="1.5" fill="#7d7d7d"/><g stroke="#a8a8a8" stroke-width=".7"><path d="M7 4.2 L14.6 4.2 M7 6.8 L14.6 6.8 M7 9.4 L14.6 9.4"/></g><g fill="none" stroke="#2b7fd6" stroke-width=".9"><path d="M3 4 L3.9 4.9 L5.4 3.2 M3 6.6 L3.9 7.5 L5.4 5.8 M3 9.2 L3.9 10.1 L5.4 8.4"/></g></svg>
<div style="left:569.2px;top:62.5px;width:0.8px;height:51.5px;background:#e2e3e4"></div>
<svg style="left:134.6px;top:123.4px" width="9" height="8.4" viewBox="0 0 9 8.4" ><path d="M8 4.2 L1.4 4.2 M4.4 1 L1.2 4.2 L4.4 7.4" fill="none" stroke="#5c5c5c" stroke-width="1.1"/></svg>
<svg style="left:151.8px;top:123.4px" width="9" height="8.4" viewBox="0 0 9 8.4" ><path d="M1 4.2 L7.6 4.2 M4.6 1 L7.8 4.2 L4.6 7.4" fill="none" stroke="#cfcfcf" stroke-width="1"/></svg>
<svg style="left:167.6px;top:126.2px" width="4.4" height="3.4" viewBox="0 0 4.4 3.4" ><path d="M.5 .6 L2.2 2.4 L3.9 .6" fill="none" stroke="#666" stroke-width=".9"/></svg>
<svg style="left:179px;top:123px" width="8.4" height="9" viewBox="0 0 8.4 9" ><path d="M4.2 8.2 L4.2 1.4 M1 4.6 L4.2 1.2 L7.4 4.6" fill="none" stroke="#5c5c5c" stroke-width="1.1"/></svg>
<div style="left:191.2px;top:121.2px;width:326.4px;height:13.4px;background:#fff;border:.8px solid #d9d9d9;box-sizing:border-box"></div>
<div style="left:505.8px;top:121.6px;width:0.8px;height:12.6px;background:#e4e4e4"></div>
<svg style="left:194px;top:122.6px" width="7.8" height="9.6" viewBox="0 0 7.6 9.2" preserveAspectRatio="none"><path d="M1 .2 L6.9 .2 Q7.6 .2 7.6 .9 L7.6 9.2 L1 9.2Z" fill="#f1c548"/><path d="M0 1.3 Q0 .7 .6 .7 L5.9 .7 L5.9 8.7 L0 8.7Z" fill="#fbe08e"/><path d="M0 1.3 Q0 .7 .6 .7 L5.9 .7 L5.9 1.5 L0 1.5Z" fill="#f7d572"/></svg>
<svg style="left:206.8px;top:125.6px" width="3" height="4.8" viewBox="0 0 3 4.8" ><path d="M.6 .8 L2.1 2.4 L.6 4" fill="none" stroke="#5a5a5a" stroke-width=".9"/></svg>
<svg style="left:230.6px;top:125.6px" width="3" height="4.8" viewBox="0 0 3 4.8" ><path d="M.6 .8 L2.1 2.4 L.6 4" fill="none" stroke="#5a5a5a" stroke-width=".9"/></svg>
<svg style="left:272.8px;top:125.6px" width="3" height="4.8" viewBox="0 0 3 4.8" ><path d="M.6 .8 L2.1 2.4 L.6 4" fill="none" stroke="#5a5a5a" stroke-width=".9"/></svg>
<svg style="left:497.4px;top:126px" width="6" height="4.4" viewBox="0 0 6 4.4" ><path d="M.6 .7 L3 3.3 L5.4 .7" fill="none" stroke="#444" stroke-width="1.1"/></svg>
<svg style="left:508.6px;top:124.2px" width="6.6" height="7.2" viewBox="0 0 6.6 7.2" ><path d="M5 2.6 A2.5 2.5 0 1 0 5.7 4.6" fill="none" stroke="#454545" stroke-width="1"/><path d="M3.4 .4 L5.9 .4 L5.9 3.1Z" fill="#454545"/></svg>
<div style="left:525.2px;top:121.2px;width:117.6px;height:13.4px;background:#fff;border:.8px solid #d9d9d9;box-sizing:border-box"></div>
<svg style="left:631px;top:124px" width="8" height="8" viewBox="0 0 8 8" ><circle cx="4.9" cy="3" r="2.1" fill="none" stroke="#555" stroke-width=".9"/><path d="M3.4 4.6 L.8 7.2" stroke="#555" stroke-width="1"/></svg>
<div style="left:128px;top:219.1px;width:144.5px;height:13.5px;background:#d9d9d9"></div>
<div style="left:274.4px;top:140px;width:0.7px;height:228px;background:#f0f0f0"></div>
<svg style="left:143.6px;top:146.6px" width="7.4" height="7.4" viewBox="0 0 7.4 7.4" ><path d="M3.7 .3 L4.7 2.7 L7.2 2.9 L5.3 4.6 L5.9 7.1 L3.7 5.8 L1.5 7.1 L2.1 4.6 L.2 2.9 L2.7 2.7Z" fill="#1e90f0"/></svg>
<div style="left:142.2px;top:166px;width:8.6px;height:6.8px;background:#1e90f5;border-bottom:.8px solid #0b63b8;box-sizing:border-box"></div>
<svg style="left:146.4px;top:179.4px" width="10" height="9" viewBox="0 0 10 9" ><g fill="#1f8ae6"><path d="M2.6 .4 L4.8 1.8 L2.6 3.2 L.4 1.8Z"/><path d="M7 .4 L9.2 1.8 L7 3.2 L4.8 1.8Z"/><path d="M2.6 3.2 L4.8 4.6 L2.6 6 L.4 4.6Z"/><path d="M7 3.2 L9.2 4.6 L7 6 L4.8 4.6Z"/><path d="M2.8 6.4 L4.8 5.2 L6.8 6.4 L4.8 7.8Z"/></g><circle cx="2.5" cy="6.7" r="2.2" fill="#35ad45"/><path d="M1.3 6.7 L2.2 7.7 L3.7 5.8" fill="none" stroke="#fff" stroke-width=".7"/></svg>
<svg style="left:146.6px;top:194.4px" width="10" height="7" viewBox="0 0 10 7" ><path d="M2.2 6.4 Q.2 6.4 .4 4.8 Q.6 3.6 2 3.6 Q2.4 1.4 4.6 1.2 Q6.4 1.2 7 2.8 Q9.4 2.8 9.6 4.8 Q9.6 6.4 8 6.4Z" fill="#0b3aa6"/><path d="M3.6 6.4 Q2.4 5 4 3.8 Q5 2.4 6.8 3 Q9.2 3.2 9.6 4.8 Q9.6 6.4 8 6.4Z" fill="#1f5ac8"/><path d="M2.6 4.4 Q4.4 2.6 6.6 3.6" fill="none" stroke="#e8effa" stroke-width=".5"/></svg>
<svg style="left:147.4px;top:206.6px" width="8" height="10" viewBox="0 0 8 10" ><circle cx="4" cy="2.6" r="2" fill="#c99a6e"/><path d="M2 2.2 Q2 .3 4 .3 Q6 .3 6 2.2 Q5 1.4 4 1.6 Q3 1.4 2 2.2Z" fill="#3a2a1e"/><path d="M.3 9.6 Q.3 5.2 4 5.2 Q7.7 5.2 7.7 9.6Z" fill="#2f8a4e"/><path d="M3 5.3 L4 7 L5 5.3Z" fill="#e9f2ea"/></svg>
<svg style="left:146.4px;top:221.4px" width="10.4" height="9.4" viewBox="0 0 10.4 9.4" ><rect x=".5" y=".5" width="9.4" height="6" fill="#5ab6f4" stroke="#2c7fc6" stroke-width=".7"/><path d="M1 1 L9.4 1 L1 5Z" fill="#8fd0fa" opacity=".7"/><rect x="1.2" y="8" width="8" height=".9" fill="#6b8aa8"/><rect x="4" y="6.6" width="2.4" height="1.4" fill="#9ab0c4"/></svg>
<svg style="left:146.6px;top:235.4px" width="10" height="9.4" viewBox="0 0 10 9.4" ><path d="M.4 1 L3.6 1 L4.4 2 L9.4 2 L9.4 8.8 L.4 8.8Z" fill="#f3c94a"/><rect x=".4" y="2.6" width="9" height="3" fill="#fbe08a"/><rect x="2.2" y="5.4" width="5.4" height="3.4" fill="#25a5ee"/><rect x="3.8" y="7" width="2.2" height="1.8" fill="#f3c94a"/></svg>
<svg style="left:146.4px;top:249.4px" width="10.4" height="9.4" viewBox="0 0 10.4 9.4" ><path d="M.6 4.2 L6.4 3 L6.4 7 L.6 8.2Z" fill="#3f97e2"/><path d="M6.4 3 L9.6 1.6 L9.6 5.6 L6.4 7Z" fill="#2a6fb8"/><path d="M.6 4.2 L3.8 2.8 L9.6 1.6 L6.4 3Z" fill="#8cc6f6"/><circle cx="7" cy="1.6" r="1.2" fill="#58a8ec"/></svg>
<svg style="left:146.4px;top:263px" width="11" height="9.6" viewBox="0 0 11 9.6" ><path d="M1.6 4.4 L5.6 4.4 M5.6 4.4 L8.4 1.8 M5.6 4.4 L8.6 7.4" stroke="#58a55a" stroke-width=".8"/><circle cx="1.6" cy="4.4" r="1.2" fill="#1c74d4"/><circle cx="5.4" cy="4.4" r="1.9" fill="#3cae4a"/><circle cx="8.4" cy="1.8" r="1.3" fill="#1c74d4"/><circle cx="8.6" cy="7.4" r="1.5" fill="#1c74d4"/></svg>
<svg style="left:146.4px;top:278px" width="10.4" height="8.4" viewBox="0 0 10.4 8.4" ><rect x=".4" y=".4" width="9.6" height="7.6" fill="#3d9be8" stroke="#1f68b4" stroke-width=".7"/><rect x="1.6" y="1.6" width="7.2" height="5.2" fill="#d8ecfb"/><circle cx="3.6" cy="3.4" r="1.1" fill="#e8b52c"/><rect x="5.6" y="2.2" width="2.6" height="1.4" fill="#2a78c8"/><rect x="2.4" y="5" width="5.6" height="1.1" fill="#3aa04a"/></svg>
<svg style="left:147.6px;top:291px" width="8" height="10" viewBox="0 0 8 10" ><path d="M.6 1.2 L7.4 1.2 L6.6 9.4 L1.4 9.4Z" fill="#f2f4f6" stroke="#9aa3ab" stroke-width=".6"/><path d="M.4 1.2 L7.6 1.2" stroke="#8a939b" stroke-width=".7"/><circle cx="4" cy="5.6" r="1.6" fill="none" stroke="#1f7fe0" stroke-width="1" stroke-dasharray="2.2 1.1"/></svg>
<div style="left:282.8px;top:142.7px;width:42.8px;height:53.4px;background:#cce8ff"></div>
<div style="left:328px;top:142.7px;width:42.8px;height:53.4px;background:#cce8ff;border:.8px solid #99d1ff;box-sizing:border-box"></div>
<div style="left:275px;top:140px;width:366px;height:227.6px;overflow:hidden"><div style="left:-275px;top:-140px;width:800px;height:450px"><div style="left:290.8px;top:144.3px;width:26.6px;height:17px;overflow:hidden;box-shadow:.5px .5px .9px rgba(0,0,0,.15)"><svg style="left:-.9px;top:-.9px;filter:blur(.5px)" width="28.4" height="18.8" viewBox="0 0 26.6 17" preserveAspectRatio="none"><use href="#tA"/></svg></div><div style="left:335.33px;top:144.3px;width:26.6px;height:17px;overflow:hidden;box-shadow:.5px .5px .9px rgba(0,0,0,.15)"><svg style="left:-.9px;top:-.9px;filter:blur(.5px)" width="28.4" height="18.8" viewBox="0 0 26.6 17" preserveAspectRatio="none"><use href="#tA"/></svg></div><div style="left:379.86px;top:144.3px;width:26.6px;height:17px;overflow:hidden;box-shadow:.5px .5px .9px rgba(0,0,0,.15)"><svg style="left:-.9px;top:-.9px;filter:blur(.5px)" width="28.4" height="18.8" viewBox="0 0 26.6 17" preserveAspectRatio="none"><use href="#tA"/></svg></div><div style="left:424.39px;top:144.3px;width:26.6px;height:17px;overflow:hidden;box-shadow:.5px .5px .9px rgba(0,0,0,.15)"><svg style="left:-.9px;top:-.9px;filter:blur(.5px)" width="28.4" height="18.8" viewBox="0 0 26.6 17" preserveAspectRatio="none"><use href="#tB"/></svg></div><div style="left:468.92px;top:144.3px;width:26.6px;height:17px;overflow:hidden;box-shadow:.5px .5px .9px rgba(0,0,0,.15)"><svg style="left:-.9px;top:-.9px;filter:blur(.5px)" width="28.4" height="18.8" viewBox="0 0 26.6 17" preserveAspectRatio="none"><use href="#tC"/></svg></div><div style="left:513.45px;top:144.3px;width:26.6px;height:17px;overflow:hidden;box-shadow:.5px .5px .9px rgba(0,0,0,.15)"><svg style="left:-.9px;top:-.9px;filter:blur(.5px)" width="28.4" height="18.8" viewBox="0 0 26.6 17" preserveAspectRatio="none"><use href="#tC"/></svg></div><div style="left:557.98px;top:144.3px;width:26.6px;height:17px;overflow:hidden;box-shadow:.5px .5px .9px rgba(0,0,0,.15)"><svg style="left:-.9px;top:-.9px;filter:blur(.5px)" width="28.4" height="18.8" viewBox="0 0 26.6 17" preserveAspectRatio="none"><use href="#tC"/></svg></div><div style="left:602.51px;top:144.3px;width:26.6px;height:17px;overflow:hidden;box-shadow:.5px .5px .9px rgba(0,0,0,.15)"><svg style="left:-.9px;top:-.9px;filter:blur(.5px)" width="28.4" height="18.8" viewBox="0 0 26.6 17" preserveAspectRatio="none"><use href="#tC"/></svg></div><div style="left:290.8px;top:207.0px;width:26.6px;height:17.6px;overflow:hidden;box-shadow:.5px .5px .9px rgba(0,0,0,.15)"><svg style="left:-.9px;top:-.9px;filter:blur(.5px)" width="28.4" height="19.4" viewBox="0 0 26.6 17.6" preserveAspectRatio="none"><use href="#tD"/></svg></div><div style="left:339.53px;top:198.2px;width:18.2px;height:26.4px;overflow:hidden;box-shadow:.5px .5px .9px rgba(0,0,0,.15)"><svg style="left:-.9px;top:-.9px;filter:blur(.5px)" width="20.0" height="28.2" viewBox="0 0 18.2 26.4" preserveAspectRatio="none"><use href="#tE"/></svg></div><div style="left:384.06px;top:198.2px;width:18.2px;height:26.4px;overflow:hidden;box-shadow:.5px .5px .9px rgba(0,0,0,.15)"><svg style="left:-.9px;top:-.9px;filter:blur(.5px)" width="20.0" height="28.2" viewBox="0 0 18.2 26.4" preserveAspectRatio="none"><use href="#tE"/></svg></div><div style="left:428.59px;top:198.2px;width:18.2px;height:26.4px;overflow:hidden;box-shadow:.5px .5px .9px rgba(0,0,0,.15)"><svg style="left:-.9px;top:-.9px;filter:blur(.5px)" width="20.0" height="28.2" viewBox="0 0 18.2 26.4" preserveAspectRatio="none"><use href="#tE"/></svg></div><div style="left:473.12px;top:198.2px;width:18.2px;height:26.4px;overflow:hidden;box-shadow:.5px .5px .9px rgba(0,0,0,.15)"><svg style="left:-.9px;top:-.9px;filter:blur(.5px)" width="20.0" height="28.2" viewBox="0 0 18.2 26.4" preserveAspectRatio="none"><use href="#tE"/></svg></div><div style="left:517.65px;top:198.2px;width:18.2px;height:26.4px;overflow:hidden;box-shadow:.5px .5px .9px rgba(0,0,0,.15)"><svg style="left:-.9px;top:-.9px;filter:blur(.5px)" width="20.0" height="28.2" viewBox="0 0 18.2 26.4" preserveAspectRatio="none"><use href="#tE"/></svg></div><div style="left:562.18px;top:198.2px;width:18.2px;height:26.4px;overflow:hidden;box-shadow:.5px .5px .9px rgba(0,0,0,.15)"><svg style="left:-.9px;top:-.9px;filter:blur(.5px)" width="20.0" height="28.2" viewBox="0 0 18.2 26.4" preserveAspectRatio="none"><use href="#tF"/></svg></div><div style="left:606.71px;top:198.2px;width:18.2px;height:26.4px;overflow:hidden;box-shadow:.5px .5px .9px rgba(0,0,0,.15)"><svg style="left:-.9px;top:-.9px;filter:blur(.5px)" width="20.0" height="28.2" viewBox="0 0 18.2 26.4" preserveAspectRatio="none"><use href="#tF"/></svg></div><div style="left:295.0px;top:261.5px;width:18.2px;height:26.4px;overflow:hidden;box-shadow:.5px .5px .9px rgba(0,0,0,.15)"><svg style="left:-.9px;top:-.9px;filter:blur(.5px)" width="20.0" height="28.2" viewBox="0 0 18.2 26.4" preserveAspectRatio="none"><use href="#tF"/></svg></div><div style="left:339.53px;top:261.5px;width:18.2px;height:26.4px;overflow:hidden;box-shadow:.5px .5px .9px rgba(0,0,0,.15)"><svg style="left:-.9px;top:-.9px;filter:blur(.5px)" width="20.0" height="28.2" viewBox="0 0 18.2 26.4" preserveAspectRatio="none"><use href="#tG"/></svg></div><div style="left:384.06px;top:261.5px;width:18.2px;height:26.4px;overflow:hidden;box-shadow:.5px .5px .9px rgba(0,0,0,.15)"><svg style="left:-.9px;top:-.9px;filter:blur(.5px)" width="20.0" height="28.2" viewBox="0 0 18.2 26.4" preserveAspectRatio="none"><use href="#tH"/></svg></div><div style="left:428.59px;top:261.5px;width:18.2px;height:26.4px;overflow:hidden;box-shadow:.5px .5px .9px rgba(0,0,0,.15)"><svg style="left:-.9px;top:-.9px;filter:blur(.5px)" width="20.0" height="28.2" viewBox="0 0 18.2 26.4" preserveAspectRatio="none"><use href="#tH"/></svg></div><div style="left:473.12px;top:261.5px;width:18.2px;height:26.4px;overflow:hidden;box-shadow:.5px .5px .9px rgba(0,0,0,.15)"><svg style="left:-.9px;top:-.9px;filter:blur(.5px)" width="20.0" height="28.2" viewBox="0 0 18.2 26.4" preserveAspectRatio="none"><use href="#tH"/></svg></div><div style="left:517.65px;top:261.5px;width:18.2px;height:26.4px;overflow:hidden;box-shadow:.5px .5px .9px rgba(0,0,0,.15)"><svg style="left:-.9px;top:-.9px;filter:blur(.5px)" width="20.0" height="28.2" viewBox="0 0 18.2 26.4" preserveAspectRatio="none"><use href="#tH"/></svg></div><div style="left:562.18px;top:261.5px;width:18.2px;height:26.4px;overflow:hidden;box-shadow:.5px .5px .9px rgba(0,0,0,.15)"><svg style="left:-.9px;top:-.9px;filter:blur(.5px)" width="20.0" height="28.2" viewBox="0 0 18.2 26.4" preserveAspectRatio="none"><use href="#tH"/></svg></div><div style="left:606.71px;top:261.5px;width:18.2px;height:26.4px;overflow:hidden;box-shadow:.5px .5px .9px rgba(0,0,0,.15)"><svg style="left:-.9px;top:-.9px;filter:blur(.5px)" width="20.0" height="28.2" viewBox="0 0 18.2 26.4" preserveAspectRatio="none"><use href="#tH"/></svg></div><div style="left:290.8px;top:334.2px;width:26.6px;height:17px;overflow:hidden;box-shadow:.5px .5px .9px rgba(0,0,0,.15)"><svg style="left:-.9px;top:-.9px;filter:blur(.5px)" width="28.4" height="18.8" viewBox="0 0 26.6 17" preserveAspectRatio="none"><use href="#tI"/></svg></div><div style="left:335.33px;top:334.2px;width:26.6px;height:17px;overflow:hidden;box-shadow:.5px .5px .9px rgba(0,0,0,.15)"><svg style="left:-.9px;top:-.9px;filter:blur(.5px)" width="28.4" height="18.8" viewBox="0 0 26.6 17" preserveAspectRatio="none"><use href="#tI"/></svg></div><div style="left:379.86px;top:334.2px;width:26.6px;height:17px;overflow:hidden;box-shadow:.5px .5px .9px rgba(0,0,0,.15)"><svg style="left:-.9px;top:-.9px;filter:blur(.5px)" width="28.4" height="18.8" viewBox="0 0 26.6 17" preserveAspectRatio="none"><use href="#tI"/></svg></div><div style="left:424.39px;top:334.2px;width:26.6px;height:17px;overflow:hidden;box-shadow:.5px .5px .9px rgba(0,0,0,.15)"><svg style="left:-.9px;top:-.9px;filter:blur(.5px)" width="28.4" height="18.8" viewBox="0 0 26.6 17" preserveAspectRatio="none"><use href="#tI"/></svg></div><div style="left:468.92px;top:334.2px;width:26.6px;height:17px;overflow:hidden;box-shadow:.5px .5px .9px rgba(0,0,0,.15)"><svg style="left:-.9px;top:-.9px;filter:blur(.5px)" width="28.4" height="18.8" viewBox="0 0 26.6 17" preserveAspectRatio="none"><use href="#tI2"/></svg></div><div style="left:513.45px;top:334.2px;width:26.6px;height:17px;overflow:hidden;box-shadow:.5px .5px .9px rgba(0,0,0,.15)"><svg style="left:-.9px;top:-.9px;filter:blur(.5px)" width="28.4" height="18.8" viewBox="0 0 26.6 17" preserveAspectRatio="none"><use href="#tI3"/></svg></div><div style="left:562.18px;top:324.8px;width:18.2px;height:26.4px;overflow:hidden;box-shadow:.5px .5px .9px rgba(0,0,0,.15)"><svg style="left:-.9px;top:-.9px;filter:blur(.5px)" width="20.0" height="28.2" viewBox="0 0 18.2 26.4" preserveAspectRatio="none"><use href="#tJ"/></svg></div><div style="left:606.71px;top:324.8px;width:18.2px;height:26.4px;overflow:hidden;box-shadow:.5px .5px .9px rgba(0,0,0,.15)"><svg style="left:-.9px;top:-.9px;filter:blur(.5px)" width="20.0" height="28.2" viewBox="0 0 18.2 26.4" preserveAspectRatio="none"><use href="#tJ"/></svg></div></div></div>
<div style="left:641px;top:140px;width:9.4px;height:227.6px;background:#f0f0f0"></div>
<div style="left:641px;top:149px;width:9.4px;height:44.6px;background:#cdcdcd"></div>
<svg style="left:643.2px;top:143px" width="5" height="4" viewBox="0 0 5 4" ><path d="M.5 3 L2.5 1 L4.5 3" fill="none" stroke="#303030" stroke-width="1.2"/></svg>
<svg style="left:643.2px;top:360.8px" width="5" height="4" viewBox="0 0 5 4" ><path d="M.5 1 L2.5 3 L4.5 1" fill="none" stroke="#262626" stroke-width="1.3"/></svg>
<div style="left:181.4px;top:370.4px;width:0.7px;height:8px;background:#ececec"></div>
<div style="left:269px;top:370.4px;width:0.7px;height:8px;background:#ececec"></div>
<svg style="left:291.6px;top:369.6px" width="11" height="9" viewBox="0 0 11 9" ><circle cx="3" cy="2.6" r="1.7" fill="#4a3526"/><path d="M.2 8.6 Q.2 4.6 3 4.6 Q5.8 4.6 5.8 8.6Z" fill="#2f8a4e"/><circle cx="7.4" cy="2" r="1.7" fill="#3f3020"/><path d="M4.8 7.8 Q4.8 4 7.4 4 Q10.2 4 10.2 7.8Z" fill="#2e86d8"/></svg>
<svg style="left:624.4px;top:369.4px" width="10" height="8.4" viewBox="0 0 10 8.4" ><rect x=".3" y=".3" width="1.9" height="7.6" fill="#f4f4f4" stroke="#aab2ba" stroke-width=".5"/><path d="M.3 2.8 L2.2 2.8 M.3 5.4 L2.2 5.4" stroke="#aab2ba" stroke-width=".5"/><rect x=".6" y="5.7" width="1.3" height="1.9" fill="#eaa394"/><g fill="#8f9aa6"><rect x="3.4" y="1" width="2.2" height=".9"/><rect x="3.4" y="3.6" width="2.2" height=".9"/><rect x="3.4" y="6.2" width="2.2" height=".9"/><rect x="6.8" y="1" width="2.2" height=".9"/><rect x="6.8" y="3.6" width="2.2" height=".9"/><rect x="6.8" y="6.2" width="2.2" height=".9"/></g></svg>
<svg style="left:637px;top:369.8px" width="9.4" height="7.6" viewBox="0 0 9.4 7.6" ><rect x=".4" y=".4" width="8.6" height="6.8" fill="#eef1f4" stroke="#b4bbc2" stroke-width=".8"/><rect x="1.5" y="1.6" width="6.4" height="4.2" fill="#8cb8e2"/><path d="M1.5 5.8 L3.4 3.2 L5.2 4.6 L7.9 3.4 L7.9 5.8Z" fill="#23472e"/></svg>
<div style="left:0px;top:425.6px;width:800px;height:1.6px;background:#459fe6"></div>
<div style="left:0px;top:427px;width:800px;height:23px;background:#09151f"></div>
<div style="left:28.5px;top:427px;width:201.6px;height:23px;background:#333"></div>
<svg style="left:9px;top:433.6px" width="10.6" height="9.6" viewBox="0 0 10.6 9.6" ><path d="M0 1.5 L4.4 .9 L4.4 4.5 L0 4.5Z M5.1 .8 L10.4 0 L10.4 4.5 L5.1 4.5Z M0 5.1 L4.4 5.1 L4.4 8.7 L0 8.1Z M5.1 5.1 L10.4 5.1 L10.4 9.6 L5.1 8.8Z" fill="#fff"/></svg>
<svg style="left:237px;top:433.4px" width="13.6" height="10" viewBox="0 0 13.6 10" ><rect x="3" y=".8" width="7.6" height="8.4" rx=".8" fill="none" stroke="#dcdcdc" stroke-width="1"/><path d="M2 2.2 L.6 2.2 L.6 7.8 L2 7.8 M11.6 2.2 L13 2.2 L13 7.8 L11.6 7.8" fill="none" stroke="#dcdcdc" stroke-width=".9"/></svg>
<svg style="left:266.2px;top:431.6px" width="13.6" height="13.6" viewBox="0 0 13.6 13.6" ><circle cx="6.8" cy="6.8" r="6.6" fill="#db4437"/><path d="M6.8 6.8 L1.1 3.5 A6.6 6.6 0 0 0 7.9 13.3Z" fill="#0f9d58"/><path d="M6.8 6.8 L7.9 13.3 A6.6 6.6 0 0 0 12.6 3.6 L6.8 3.6Z" fill="#ffcd40"/><circle cx="6.8" cy="6.8" r="3.1" fill="#f1f1f1"/><circle cx="6.8" cy="6.8" r="2.4" fill="#4285f4"/></svg>
<div style="left:287.6px;top:427px;width:28.6px;height:23px;background:#3b434b"></div>
<div style="left:287.6px;top:448.4px;width:28.6px;height:1.6px;background:#c9d3dc"></div>
<svg style="left:295px;top:432.6px" width="13.2" height="11.2" viewBox="0 0 13.2 11.2" ><path d="M.2 1 L4.4 1 L5.4 2.2 L13 2.2 L13 11 L.2 11Z" fill="#f2c84b"/><rect x=".2" y="3" width="12.8" height="3.6" fill="#fbe28e"/><rect x="2.6" y="6.4" width="8" height="4.6" fill="#29a8f0"/><rect x="5" y="8.6" width="3.2" height="2.4" fill="#f2c84b"/></svg>
<svg style="left:323.4px;top:430.6px" width="14.6" height="14.6" viewBox="0 0 14.6 14.6" ><path d="M4.6 4 Q4.6 .8 7.3 .8 Q10 .8 10 4" fill="none" stroke="#fff" stroke-width="1"/><path d="M.6 4.6 L14 3.2 L13.2 14 L1.6 12.8Z" fill="#fff"/><g fill="#09151f"><rect x="4" y="6" width="2.8" height="2.4"/><rect x="7.6" y="5.8" width="3" height="2.6"/><rect x="4" y="9" width="2.8" height="2.4"/><rect x="7.6" y="9" width="3" height="2.8"/></g></svg>
<svg style="left:352px;top:432px" width="14.6" height="12.6" viewBox="0 0 14.6 12.6" ><g transform="rotate(12 7.3 6.3)"><rect x="1" y="2.6" width="12.6" height="7.6" fill="#1d1d1f" stroke="#6b6b70" stroke-width=".6"/><path d="M2.4 4.6 L12 4.6 M2.4 6.4 L12 6.4 M2.4 8.2 L12 8.2" stroke="#b9b9c2" stroke-width=".8" stroke-dasharray="2.2 .8"/></g></svg>
<svg style="left:380.6px;top:431px" width="15" height="15" viewBox="0 0 15 15" ><circle cx="7.5" cy="7.5" r="7" fill="#1d5eb6"/><path d="M1.2 5.4 Q3.6 .4 9 .8 Q13.6 2.2 14.2 7 Q11.4 3.2 7.2 3.6 Q3.4 4 1.2 5.4Z" fill="#5aa4e8"/><path d="M3.4 6.8 L11.6 6 L12.4 10.8 L4.4 11.8Z" fill="#f3efe8"/><path d="M3.4 6.8 L7.8 9.4 L11.6 6" fill="none" stroke="#b0a99c" stroke-width=".6"/><path d="M.8 8 Q3.4 15 11 13 Q5.4 13.4 .8 8Z" fill="#10336f"/><path d="M11.4 12.6 Q14.4 10.6 14.2 7 Q13.6 10.8 11.4 12.6Z" fill="#10336f"/></svg>
<svg style="left:409.6px;top:431.8px" width="14" height="13.4" viewBox="0 0 14 13.4" ><defs><linearGradient id="cg" x1="0" x2="1"><stop offset="0" stop-color="#dedede"/><stop offset=".4" stop-color="#a2a2a2"/><stop offset=".75" stop-color="#555"/><stop offset="1" stop-color="#2a2a2a"/></linearGradient></defs><rect width="14" height="13.4" fill="url(#cg)"/><path d="M5 0 L14 0 L14 5.4 L10.4 6.6 L7.4 3.2Z" fill="#161616"/><path d="M1 1 L3 0 L4 4 L2 6Z M2 8 L5 7 L6 12 L3 13Z" fill="#f0f0f0" opacity=".55"/><ellipse cx="9.8" cy="4.8" rx="2.1" ry="1.4" fill="#b9981a"/><circle cx="10.2" cy="4.8" r=".8" fill="#1d2a10"/><path d="M6.4 9 L14 7.6 L14 13.4 L7.6 13.4Z" fill="#2b2b2b" opacity=".75"/><path d="M8 8.6 L12 8" stroke="#cfcfcf" stroke-width=".5"/></svg>
<svg style="left:439px;top:431.8px" width="13" height="12.2" viewBox="0 0 13 12.2" ><rect x=".5" y=".5" width="12" height="11.2" fill="#0b1c33" stroke="#2ea3df" stroke-width="1"/><text x="6.5" y="9" font-size="7" font-weight="bold" fill="#3fb4ec" text-anchor="middle">Ps</text></svg>
<svg style="left:467.4px;top:431.8px" width="13" height="12.2" viewBox="0 0 13 12.2" ><rect x=".5" y=".5" width="12" height="11.2" fill="#0d2a08" stroke="#4cd400" stroke-width="1"/><text x="6.5" y="8.8" font-size="6.6" font-weight="bold" fill="#5be000" text-anchor="middle" textLength="10" lengthAdjust="spacingAndGlyphs">Dw</text></svg>
<svg style="left:495.8px;top:432px" width="13.2" height="12.8" viewBox="0 0 13.2 12.8" ><g fill="#f3c318" stroke="#a67f05" stroke-width=".4"><path d="M.4 1.6 L5 1.6 L5 4.6 L.4 4.6Z"/><path d="M7.4 .4 L11.4 .4 L11.4 4 L7.4 4Z"/><path d="M3.2 5 L8 5 L8 8.6 L3.2 8.6Z"/><path d="M8.4 6.2 L12.8 6.2 L12.8 12.4 L6 12.4 L6 9.4 L8.4 9.4Z"/></g><path d="M5 3 L7.4 2.4 M5.6 5 L5.6 4 M8 7.2 L8.4 7.4" stroke="#f3c318" stroke-width="1"/></svg>
<svg style="left:524.6px;top:431.4px" width="15" height="14.6" viewBox="0 0 15 14.6" ><defs><linearGradient id="rg" x1="0" y1="0" x2=".4" y2="1"><stop offset="0" stop-color="#474b50"/><stop offset="1" stop-color="#b9bcc0"/></linearGradient></defs><circle cx="7.7" cy="6.9" r="5.1" fill="none" stroke="url(#rg)" stroke-width="2.3"/><path d="M8.8 1.9 A5.1 5.1 0 0 1 12.7 5.9" fill="none" stroke="#ee3b24" stroke-width="2.4"/><path d="M3.9 10.6 L1 13.4" stroke="#c9ccd0" stroke-width="1.7"/></svg>
<svg style="left:552.4px;top:431.6px" width="14" height="13.8" viewBox="0 0 14 13.8" ><path d="M.6 2 Q3.6 -.2 7 1.6 Q10.4 -.2 13.4 2 L13.4 12 Q10.4 10.4 7 12 Q3.6 10.4 .6 12Z" fill="#f4f4f4"/><path d="M7 1.8 L7 12" stroke="#c4c4c4" stroke-width=".5"/><text x="7" y="9.6" font-size="7" fill="#222" text-anchor="middle" textLength="6.6" lengthAdjust="spacingAndGlyphs">漢</text><path d="M.6 12.8 Q3.6 11.4 7 12.9 Q10.4 11.4 13.4 12.8" fill="none" stroke="#e8e8e8" stroke-width=".8"/></svg>
<svg style="left:580.8px;top:431.6px" width="13.6" height="13.6" viewBox="0 0 13.6 13.6" ><defs><linearGradient id="it" x1="0" y1="0" x2="0" y2="1"><stop offset="0" stop-color="#f95b8d"/><stop offset=".5" stop-color="#c55be0"/><stop offset="1" stop-color="#3ba2f2"/></linearGradient></defs><circle cx="6.8" cy="6.8" r="6.4" fill="#fbfbfd" stroke="url(#it)" stroke-width=".9"/><path d="M5.2 9.6 L5.2 4.2 L9.4 3.2 L9.4 8.6" fill="none" stroke="url(#it)" stroke-width="1"/><ellipse cx="4.4" cy="9.7" rx="1.2" ry=".95" fill="#7d68ea"/><ellipse cx="8.6" cy="8.7" rx="1.2" ry=".95" fill="#4a96f2"/></svg>
<svg style="left:610.8px;top:431.8px" width="9.6" height="13" viewBox="0 0 9.6 13" ><path d="M0 0 L6.8 0 L9.4 2.6 L9.4 12.8 L0 12.8Z" fill="#fafafa"/><path d="M6.8 0 L6.8 2.6 L9.4 2.6Z" fill="#d2d2d2"/></svg>
<svg style="left:636.4px;top:431.8px" width="15.6" height="14" viewBox="0 0 15.6 14" ><path d="M2.6 12.6 Q.4 12.6 .5 10.4 Q.7 8.6 2.4 8.6 Q2.4 6.6 4 6 M13 6.4 Q15.2 7 15 9.6 Q14.8 12.6 12.2 12.6 Q10 13.6 8.4 12.6 Q6.4 13.6 4.8 12.6Z" fill="none" stroke="#33a8dc" stroke-width="1"/><path d="M3.2 1.6 L6.6 1.6 L7.4 2.6 L12.8 2.6 L12.8 10.2 L3.2 10.2Z" fill="#8a2b9e"/><rect x="3.2" y="3.4" width="9.6" height="1" fill="#a64cba"/></svg>
<div style="left:632.4px;top:448.4px;width:23.4px;height:1.6px;background:#dfe6ec"></div>
<svg style="left:662.6px;top:434.6px" width="8.6" height="6" viewBox="0 0 8.6 6" ><path d="M.8 5 L4.3 1.4 L7.8 5" fill="none" stroke="#f2f2f2" stroke-width="1"/></svg>
<svg style="left:675.6px;top:433.6px" width="10.6" height="9" viewBox="0 0 10.6 9" ><circle cx="1.8" cy="2.2" r="1.3" fill="none" stroke="#f2f2f2" stroke-width=".8"/><path d="M1.8 3.4 L1.8 6.6 L3 6.6" fill="none" stroke="#f2f2f2" stroke-width=".8"/><rect x="3.2" y="2.6" width="6" height="4.8" fill="#f2f2f2"/><rect x="9.2" y="3.8" width="1" height="2.4" fill="#f2f2f2"/></svg>
<svg style="left:691.6px;top:433.2px" width="8" height="9.4" viewBox="0 0 8 9.4" ><g fill="none" stroke="#f2f2f2" stroke-width=".9"><path d="M.6 8.6 A7.4 7.4 0 0 1 7.6 1.2"/><path d="M2.8 8.8 A5 5 0 0 1 7.6 3.8"/><path d="M5 8.8 A2.6 2.6 0 0 1 7.6 6.2"/></g><circle cx="6.9" cy="8.2" r=".9" fill="#f2f2f2"/></svg>
<svg style="left:703.4px;top:433.8px" width="10" height="9" viewBox="0 0 10 9" ><path d="M.6 3 L2.4 3 L4.6 .8 L4.6 8.2 L2.4 6 L.6 6Z" fill="none" stroke="#f2f2f2" stroke-width=".8"/><path d="M6.4 3 L9.2 6 M9.2 3 L6.4 6" stroke="#f2f2f2" stroke-width=".8"/></svg>
<svg style="left:717.8px;top:433px" width="10" height="10.6" viewBox="0 0 10 10.6" ><path d="M.2 .4 L9.8 .4 L9.8 7.6 L6.6 7.6 L5 9.6 L3.4 7.6 L.2 7.6Z" fill="#f2f2f2"/><path d="M1.8 2.4 L8.2 2.4 M1.8 4 L8.2 4 M1.8 5.6 L6.4 5.6" stroke="#09151f" stroke-width=".7"/></svg>
<div style="left:797.4px;top:427px;width:0.8px;height:23px;background:#4a545c"></div>
<svg id="tx" style="left:0;top:0;pointer-events:none" width="800" height="450" viewBox="0 0 800 450"><defs><clipPath id="gclip"><rect x="275" y="140" width="366" height="227.6"/></clipPath></defs><text x="20" y="42.32" font-size="7" fill="#fff" textLength="21.3" lengthAdjust="spacingAndGlyphs" style="paint-order:stroke;stroke:#10253a;stroke-width:1.1px;stroke-opacity:.75">ごみ箱</text>
<text x="309.4" y="39.1" font-size="7.5" fill="#111" stroke="#111" stroke-width="0.12" textLength="27.2" lengthAdjust="spacingAndGlyphs">natsuko</text>
<text x="260" y="40.52" font-size="7" fill="#4c4c32" stroke="#4c4c32" stroke-width="0.12" textLength="37.5" lengthAdjust="spacingAndGlyphs">ピクチャ ツール</text>
<text x="134.4" y="55.32" font-size="7" fill="#fff" stroke="#fff" stroke-width="0.12" textLength="19.4" lengthAdjust="spacingAndGlyphs">ファイル</text>
<text x="168.8" y="55.32" font-size="7" fill="#333" stroke="#333" stroke-width="0.12" textLength="15.0" lengthAdjust="spacingAndGlyphs">ホーム</text>
<text x="201.3" y="55.32" font-size="7" fill="#333" stroke="#333" stroke-width="0.12" textLength="12.5" lengthAdjust="spacingAndGlyphs">共有</text>
<text x="232" y="55.32" font-size="7" fill="#333" stroke="#333" stroke-width="0.12" textLength="13.6" lengthAdjust="spacingAndGlyphs">表示</text>
<text x="272" y="55.32" font-size="7" fill="#333" stroke="#333" stroke-width="0.12" textLength="13" lengthAdjust="spacingAndGlyphs">操作</text>
<text x="132.5" y="92.32" font-size="7" fill="#1b1b1b" stroke="#1b1b1b" stroke-width="0.12" textLength="35.0" lengthAdjust="spacingAndGlyphs">ナビゲーション</text>
<text x="136" y="101.02" font-size="7" fill="#1b1b1b" stroke="#1b1b1b" stroke-width="0.12" textLength="22.8" lengthAdjust="spacingAndGlyphs">ウィンドウ</text>
<text x="182.5" y="71.62" font-size="7" fill="#1b1b1b" stroke="#1b1b1b" stroke-width="0.12" textLength="49.1" lengthAdjust="spacingAndGlyphs">プレビュー ウィンドウ</text>
<text x="182.5" y="84.82" font-size="7" fill="#1b1b1b" stroke="#1b1b1b" stroke-width="0.12" textLength="37.5" lengthAdjust="spacingAndGlyphs">詳細ウィンドウ</text>
<text x="175" y="112.52" font-size="7" fill="#8b8b8b" stroke="#8b8b8b" stroke-width="0.12" textLength="16.2" lengthAdjust="spacingAndGlyphs">ペイン</text>
<text x="255.6" y="73.02" font-size="7" fill="#1b1b1b" stroke="#1b1b1b" stroke-width="0.12" textLength="33.2" lengthAdjust="spacingAndGlyphs">特大アイコン</text>
<text x="305" y="73.02" font-size="7" fill="#1b1b1b" stroke="#1b1b1b" stroke-width="0.12" textLength="25.6" lengthAdjust="spacingAndGlyphs">大アイコン</text>
<text x="255.6" y="84.82" font-size="7" fill="#1b1b1b" stroke="#1b1b1b" stroke-width="0.12" textLength="26.4" lengthAdjust="spacingAndGlyphs">中アイコン</text>
<text x="305" y="84.82" font-size="7" fill="#1b1b1b" stroke="#1b1b1b" stroke-width="0.12" textLength="25.6" lengthAdjust="spacingAndGlyphs">小アイコン</text>
<text x="255.6" y="96.12" font-size="7" fill="#1b1b1b" stroke="#1b1b1b" stroke-width="0.12" textLength="13.8" lengthAdjust="spacingAndGlyphs">一覧</text>
<text x="305" y="96.12" font-size="7" fill="#1b1b1b" stroke="#1b1b1b" stroke-width="0.12" textLength="13.8" lengthAdjust="spacingAndGlyphs">詳細</text>
<text x="283" y="112.52" font-size="7" fill="#8b8b8b" stroke="#8b8b8b" stroke-width="0.12" textLength="25.8" lengthAdjust="spacingAndGlyphs">レイアウト</text>
<text x="359.4" y="92.32" font-size="7" fill="#1b1b1b" stroke="#1b1b1b" stroke-width="0.12" textLength="25.0" lengthAdjust="spacingAndGlyphs">並べ替え</text>
<text x="364.5" y="112.52" font-size="7" fill="#8b8b8b" stroke="#8b8b8b" stroke-width="0.12" textLength="33.0" lengthAdjust="spacingAndGlyphs">現在のビュー</text>
<text x="425" y="72.12" font-size="7" fill="#1b1b1b" stroke="#1b1b1b" stroke-width="0.12" textLength="55.6" lengthAdjust="spacingAndGlyphs">項目チェック ボックス</text>
<text x="425" y="85.62" font-size="7" fill="#1b1b1b" stroke="#1b1b1b" stroke-width="0.12" textLength="47" lengthAdjust="spacingAndGlyphs">ファイル名拡張子</text>
<text x="425" y="99.22" font-size="7" fill="#1b1b1b" stroke="#1b1b1b" stroke-width="0.12" textLength="30.6" lengthAdjust="spacingAndGlyphs">隠しファイル</text>
<text x="485.6" y="92.92" font-size="7" fill="#1b1b1b" stroke="#1b1b1b" stroke-width="0.12" textLength="43.2" lengthAdjust="spacingAndGlyphs">選択した項目を</text>
<text x="492.5" y="101.12" font-size="7" fill="#1b1b1b" stroke="#1b1b1b" stroke-width="0.12" textLength="30.0" lengthAdjust="spacingAndGlyphs">表示しない</text>
<text x="451.3" y="112.52" font-size="7" fill="#8b8b8b" stroke="#8b8b8b" stroke-width="0.12" textLength="37.5" lengthAdjust="spacingAndGlyphs">表示/非表示</text>
<text x="538.5" y="92.32" font-size="7" fill="#1b1b1b" stroke="#1b1b1b" stroke-width="0.12" textLength="24.5" lengthAdjust="spacingAndGlyphs">オプション</text>
<text x="215.8" y="129.92" font-size="7" fill="#222" stroke="#222" stroke-width="0.12" textLength="9.0" lengthAdjust="spacingAndGlyphs">PC</text>
<text x="239.4" y="129.92" font-size="7" fill="#222" stroke="#222" stroke-width="0.12" textLength="27.5" lengthAdjust="spacingAndGlyphs">ピクチャ</text>
<text x="282" y="129.92" font-size="7" fill="#222" stroke="#222" stroke-width="0.12" textLength="27" lengthAdjust="spacingAndGlyphs">natsuko</text>
<text x="530.6" y="129.92" font-size="7" fill="#777" stroke="#777" stroke-width="0.12" textLength="48.2" lengthAdjust="spacingAndGlyphs">natsukoの検索</text>
<text x="154.4" y="153.22" font-size="7" fill="#1b1b1b" stroke="#1b1b1b" stroke-width="0.12" textLength="58.1" lengthAdjust="spacingAndGlyphs">クイック アクセス</text>
<text x="154.4" y="172.02" font-size="7" fill="#1b1b1b" stroke="#1b1b1b" stroke-width="0.12" textLength="41.2" lengthAdjust="spacingAndGlyphs">デスクトップ</text>
<text x="159" y="186.32" font-size="7" fill="#1b1b1b" stroke="#1b1b1b" stroke-width="0.12" textLength="28.5" lengthAdjust="spacingAndGlyphs">Dropbox</text>
<text x="159" y="200.42" font-size="7" fill="#1b1b1b" stroke="#1b1b1b" stroke-width="0.12" textLength="30.4" lengthAdjust="spacingAndGlyphs">OneDrive</text>
<text x="159" y="214.22" font-size="7" fill="#1b1b1b" stroke="#1b1b1b" stroke-width="0.12" textLength="27.9" lengthAdjust="spacingAndGlyphs">安蔵靖志</text>
<text x="159" y="228.22" font-size="7" fill="#1b1b1b" stroke="#1b1b1b" stroke-width="0.12" textLength="8.5" lengthAdjust="spacingAndGlyphs">PC</text>
<text x="159" y="242.32" font-size="7" fill="#1b1b1b" stroke="#1b1b1b" stroke-width="0.12" textLength="34" lengthAdjust="spacingAndGlyphs">ライブラリ</text>
<text x="159" y="256.52" font-size="7" fill="#1b1b1b" stroke="#1b1b1b" stroke-width="0.12" textLength="41" lengthAdjust="spacingAndGlyphs">ネットワーク</text>
<text x="159" y="270.22" font-size="7" fill="#1b1b1b" stroke="#1b1b1b" stroke-width="0.12" textLength="47.9" lengthAdjust="spacingAndGlyphs">ホームグループ</text>
<text x="159" y="284.62" font-size="7" fill="#1b1b1b" stroke="#1b1b1b" stroke-width="0.12" textLength="65.4" lengthAdjust="spacingAndGlyphs">コントロール パネル</text>
<text x="159" y="298.62" font-size="7" fill="#1b1b1b" stroke="#1b1b1b" stroke-width="0.12" textLength="20.8" lengthAdjust="spacingAndGlyphs">ごみ箱</text>
<text x="293.0" y="170.77" font-size="7" fill="#1b1b1b" stroke="#1b1b1b" stroke-width="0.16" textLength="23.8" lengthAdjust="spacingAndGlyphs">151113</text>
<text x="287.1" y="181.27" font-size="7" fill="#1b1b1b" stroke="#1b1b1b" stroke-width="0.16" textLength="35.6" lengthAdjust="spacingAndGlyphs">TrandyNet</text>
<text x="290.7" y="191.87" font-size="7" fill="#1b1b1b" stroke="#1b1b1b" stroke-width="0.16" textLength="28.4" lengthAdjust="spacingAndGlyphs">1194.jpg</text>
<text x="337.48" y="170.77" font-size="7" fill="#1b1b1b" stroke="#1b1b1b" stroke-width="0.16" textLength="23.8" lengthAdjust="spacingAndGlyphs">151113</text>
<text x="331.58" y="181.27" font-size="7" fill="#1b1b1b" stroke="#1b1b1b" stroke-width="0.16" textLength="35.6" lengthAdjust="spacingAndGlyphs">TrandyNet</text>
<text x="335.18" y="191.87" font-size="7" fill="#1b1b1b" stroke="#1b1b1b" stroke-width="0.16" textLength="28.4" lengthAdjust="spacingAndGlyphs">1195.jpg</text>
<text x="381.96" y="170.77" font-size="7" fill="#1b1b1b" stroke="#1b1b1b" stroke-width="0.16" textLength="23.8" lengthAdjust="spacingAndGlyphs">151113</text>
<text x="376.06" y="181.27" font-size="7" fill="#1b1b1b" stroke="#1b1b1b" stroke-width="0.16" textLength="35.6" lengthAdjust="spacingAndGlyphs">TrandyNet</text>
<text x="379.66" y="191.87" font-size="7" fill="#1b1b1b" stroke="#1b1b1b" stroke-width="0.16" textLength="28.4" lengthAdjust="spacingAndGlyphs">1197.jpg</text>
<text x="426.44" y="170.77" font-size="7" fill="#1b1b1b" stroke="#1b1b1b" stroke-width="0.16" textLength="23.8" lengthAdjust="spacingAndGlyphs">151113</text>
<text x="420.54" y="181.27" font-size="7" fill="#1b1b1b" stroke="#1b1b1b" stroke-width="0.16" textLength="35.6" lengthAdjust="spacingAndGlyphs">TrandyNet</text>
<text x="424.14" y="191.87" font-size="7" fill="#1b1b1b" stroke="#1b1b1b" stroke-width="0.16" textLength="28.4" lengthAdjust="spacingAndGlyphs">1198.jpg</text>
<text x="470.92" y="170.77" font-size="7" fill="#1b1b1b" stroke="#1b1b1b" stroke-width="0.16" textLength="23.8" lengthAdjust="spacingAndGlyphs">151113</text>
<text x="465.02" y="181.27" font-size="7" fill="#1b1b1b" stroke="#1b1b1b" stroke-width="0.16" textLength="35.6" lengthAdjust="spacingAndGlyphs">TrandyNet</text>
<text x="468.62" y="191.87" font-size="7" fill="#1b1b1b" stroke="#1b1b1b" stroke-width="0.16" textLength="28.4" lengthAdjust="spacingAndGlyphs">1200.jpg</text>
<text x="515.4" y="170.77" font-size="7" fill="#1b1b1b" stroke="#1b1b1b" stroke-width="0.16" textLength="23.8" lengthAdjust="spacingAndGlyphs">151113</text>
<text x="509.5" y="181.27" font-size="7" fill="#1b1b1b" stroke="#1b1b1b" stroke-width="0.16" textLength="35.6" lengthAdjust="spacingAndGlyphs">TrandyNet</text>
<text x="513.1" y="191.87" font-size="7" fill="#1b1b1b" stroke="#1b1b1b" stroke-width="0.16" textLength="28.4" lengthAdjust="spacingAndGlyphs">1202.jpg</text>
<text x="559.88" y="170.77" font-size="7" fill="#1b1b1b" stroke="#1b1b1b" stroke-width="0.16" textLength="23.8" lengthAdjust="spacingAndGlyphs">151113</text>
<text x="553.98" y="181.27" font-size="7" fill="#1b1b1b" stroke="#1b1b1b" stroke-width="0.16" textLength="35.6" lengthAdjust="spacingAndGlyphs">TrandyNet</text>
<text x="557.58" y="191.87" font-size="7" fill="#1b1b1b" stroke="#1b1b1b" stroke-width="0.16" textLength="28.4" lengthAdjust="spacingAndGlyphs">1204.jpg</text>
<text x="604.36" y="170.77" font-size="7" fill="#1b1b1b" stroke="#1b1b1b" stroke-width="0.16" textLength="23.8" lengthAdjust="spacingAndGlyphs">151113</text>
<text x="598.46" y="181.27" font-size="7" fill="#1b1b1b" stroke="#1b1b1b" stroke-width="0.16" textLength="35.6" lengthAdjust="spacingAndGlyphs">TrandyNet</text>
<text x="602.06" y="191.87" font-size="7" fill="#1b1b1b" stroke="#1b1b1b" stroke-width="0.16" textLength="28.4" lengthAdjust="spacingAndGlyphs">1207.jpg</text>
<text x="293.0" y="234.07" font-size="7" fill="#1b1b1b" stroke="#1b1b1b" stroke-width="0.16" textLength="23.8" lengthAdjust="spacingAndGlyphs">151113</text>
<text x="287.1" y="244.57" font-size="7" fill="#1b1b1b" stroke="#1b1b1b" stroke-width="0.16" textLength="35.6" lengthAdjust="spacingAndGlyphs">TrandyNet</text>
<text x="290.7" y="255.17" font-size="7" fill="#1b1b1b" stroke="#1b1b1b" stroke-width="0.16" textLength="28.4" lengthAdjust="spacingAndGlyphs">1208.jpg</text>
<text x="337.48" y="234.07" font-size="7" fill="#1b1b1b" stroke="#1b1b1b" stroke-width="0.16" textLength="23.8" lengthAdjust="spacingAndGlyphs">151113</text>
<text x="331.58" y="244.57" font-size="7" fill="#1b1b1b" stroke="#1b1b1b" stroke-width="0.16" textLength="35.6" lengthAdjust="spacingAndGlyphs">TrandyNet</text>
<text x="335.18" y="255.17" font-size="7" fill="#1b1b1b" stroke="#1b1b1b" stroke-width="0.16" textLength="28.4" lengthAdjust="spacingAndGlyphs">1209.jpg</text>
<text x="381.96" y="234.07" font-size="7" fill="#1b1b1b" stroke="#1b1b1b" stroke-width="0.16" textLength="23.8" lengthAdjust="spacingAndGlyphs">151113</text>
<text x="376.06" y="244.57" font-size="7" fill="#1b1b1b" stroke="#1b1b1b" stroke-width="0.16" textLength="35.6" lengthAdjust="spacingAndGlyphs">TrandyNet</text>
<text x="379.66" y="255.17" font-size="7" fill="#1b1b1b" stroke="#1b1b1b" stroke-width="0.16" textLength="28.4" lengthAdjust="spacingAndGlyphs">1212.jpg</text>
<text x="426.44" y="234.07" font-size="7" fill="#1b1b1b" stroke="#1b1b1b" stroke-width="0.16" textLength="23.8" lengthAdjust="spacingAndGlyphs">151113</text>
<text x="420.54" y="244.57" font-size="7" fill="#1b1b1b" stroke="#1b1b1b" stroke-width="0.16" textLength="35.6" lengthAdjust="spacingAndGlyphs">TrandyNet</text>
<text x="424.14" y="255.17" font-size="7" fill="#1b1b1b" stroke="#1b1b1b" stroke-width="0.16" textLength="28.4" lengthAdjust="spacingAndGlyphs">1213.jpg</text>
<text x="470.92" y="234.07" font-size="7" fill="#1b1b1b" stroke="#1b1b1b" stroke-width="0.16" textLength="23.8" lengthAdjust="spacingAndGlyphs">151113</text>
<text x="465.02" y="244.57" font-size="7" fill="#1b1b1b" stroke="#1b1b1b" stroke-width="0.16" textLength="35.6" lengthAdjust="spacingAndGlyphs">TrandyNet</text>
<text x="468.62" y="255.17" font-size="7" fill="#1b1b1b" stroke="#1b1b1b" stroke-width="0.16" textLength="28.4" lengthAdjust="spacingAndGlyphs">1214.jpg</text>
<text x="515.4" y="234.07" font-size="7" fill="#1b1b1b" stroke="#1b1b1b" stroke-width="0.16" textLength="23.8" lengthAdjust="spacingAndGlyphs">151113</text>
<text x="509.5" y="244.57" font-size="7" fill="#1b1b1b" stroke="#1b1b1b" stroke-width="0.16" textLength="35.6" lengthAdjust="spacingAndGlyphs">TrandyNet</text>
<text x="513.1" y="255.17" font-size="7" fill="#1b1b1b" stroke="#1b1b1b" stroke-width="0.16" textLength="28.4" lengthAdjust="spacingAndGlyphs">1216.jpg</text>
<text x="559.88" y="234.07" font-size="7" fill="#1b1b1b" stroke="#1b1b1b" stroke-width="0.16" textLength="23.8" lengthAdjust="spacingAndGlyphs">151113</text>
<text x="553.98" y="244.57" font-size="7" fill="#1b1b1b" stroke="#1b1b1b" stroke-width="0.16" textLength="35.6" lengthAdjust="spacingAndGlyphs">TrandyNet</text>
<text x="557.58" y="255.17" font-size="7" fill="#1b1b1b" stroke="#1b1b1b" stroke-width="0.16" textLength="28.4" lengthAdjust="spacingAndGlyphs">1221.jpg</text>
<text x="604.36" y="234.07" font-size="7" fill="#1b1b1b" stroke="#1b1b1b" stroke-width="0.16" textLength="23.8" lengthAdjust="spacingAndGlyphs">151113</text>
<text x="598.46" y="244.57" font-size="7" fill="#1b1b1b" stroke="#1b1b1b" stroke-width="0.16" textLength="35.6" lengthAdjust="spacingAndGlyphs">TrandyNet</text>
<text x="602.06" y="255.17" font-size="7" fill="#1b1b1b" stroke="#1b1b1b" stroke-width="0.16" textLength="28.4" lengthAdjust="spacingAndGlyphs">1222.jpg</text>
<text x="293.0" y="297.37" font-size="7" fill="#1b1b1b" stroke="#1b1b1b" stroke-width="0.16" textLength="23.8" lengthAdjust="spacingAndGlyphs">151113</text>
<text x="287.1" y="307.87" font-size="7" fill="#1b1b1b" stroke="#1b1b1b" stroke-width="0.16" textLength="35.6" lengthAdjust="spacingAndGlyphs">TrandyNet</text>
<text x="290.7" y="318.47" font-size="7" fill="#1b1b1b" stroke="#1b1b1b" stroke-width="0.16" textLength="28.4" lengthAdjust="spacingAndGlyphs">1223.jpg</text>
<text x="337.48" y="297.37" font-size="7" fill="#1b1b1b" stroke="#1b1b1b" stroke-width="0.16" textLength="23.8" lengthAdjust="spacingAndGlyphs">151113</text>
<text x="331.58" y="307.87" font-size="7" fill="#1b1b1b" stroke="#1b1b1b" stroke-width="0.16" textLength="35.6" lengthAdjust="spacingAndGlyphs">TrandyNet</text>
<text x="335.18" y="318.47" font-size="7" fill="#1b1b1b" stroke="#1b1b1b" stroke-width="0.16" textLength="28.4" lengthAdjust="spacingAndGlyphs">1225.jpg</text>
<text x="381.96" y="297.37" font-size="7" fill="#1b1b1b" stroke="#1b1b1b" stroke-width="0.16" textLength="23.8" lengthAdjust="spacingAndGlyphs">151113</text>
<text x="376.06" y="307.87" font-size="7" fill="#1b1b1b" stroke="#1b1b1b" stroke-width="0.16" textLength="35.6" lengthAdjust="spacingAndGlyphs">TrandyNet</text>
<text x="379.66" y="318.47" font-size="7" fill="#1b1b1b" stroke="#1b1b1b" stroke-width="0.16" textLength="28.4" lengthAdjust="spacingAndGlyphs">1228.jpg</text>
<text x="426.44" y="297.37" font-size="7" fill="#1b1b1b" stroke="#1b1b1b" stroke-width="0.16" textLength="23.8" lengthAdjust="spacingAndGlyphs">151113</text>
<text x="420.54" y="307.87" font-size="7" fill="#1b1b1b" stroke="#1b1b1b" stroke-width="0.16" textLength="35.6" lengthAdjust="spacingAndGlyphs">TrandyNet</text>
<text x="424.14" y="318.47" font-size="7" fill="#1b1b1b" stroke="#1b1b1b" stroke-width="0.16" textLength="28.4" lengthAdjust="spacingAndGlyphs">1229.jpg</text>
<text x="470.92" y="297.37" font-size="7" fill="#1b1b1b" stroke="#1b1b1b" stroke-width="0.16" textLength="23.8" lengthAdjust="spacingAndGlyphs">151113</text>
<text x="465.02" y="307.87" font-size="7" fill="#1b1b1b" stroke="#1b1b1b" stroke-width="0.16" textLength="35.6" lengthAdjust="spacingAndGlyphs">TrandyNet</text>
<text x="468.62" y="318.47" font-size="7" fill="#1b1b1b" stroke="#1b1b1b" stroke-width="0.16" textLength="28.4" lengthAdjust="spacingAndGlyphs">1230.jpg</text>
<text x="515.4" y="297.37" font-size="7" fill="#1b1b1b" stroke="#1b1b1b" stroke-width="0.16" textLength="23.8" lengthAdjust="spacingAndGlyphs">151113</text>
<text x="509.5" y="307.87" font-size="7" fill="#1b1b1b" stroke="#1b1b1b" stroke-width="0.16" textLength="35.6" lengthAdjust="spacingAndGlyphs">TrandyNet</text>
<text x="513.1" y="318.47" font-size="7" fill="#1b1b1b" stroke="#1b1b1b" stroke-width="0.16" textLength="28.4" lengthAdjust="spacingAndGlyphs">1231.jpg</text>
<text x="559.88" y="297.37" font-size="7" fill="#1b1b1b" stroke="#1b1b1b" stroke-width="0.16" textLength="23.8" lengthAdjust="spacingAndGlyphs">151113</text>
<text x="553.98" y="307.87" font-size="7" fill="#1b1b1b" stroke="#1b1b1b" stroke-width="0.16" textLength="35.6" lengthAdjust="spacingAndGlyphs">TrandyNet</text>
<text x="557.58" y="318.47" font-size="7" fill="#1b1b1b" stroke="#1b1b1b" stroke-width="0.16" textLength="28.4" lengthAdjust="spacingAndGlyphs">1232.jpg</text>
<text x="604.36" y="297.37" font-size="7" fill="#1b1b1b" stroke="#1b1b1b" stroke-width="0.16" textLength="23.8" lengthAdjust="spacingAndGlyphs">151113</text>
<text x="598.46" y="307.87" font-size="7" fill="#1b1b1b" stroke="#1b1b1b" stroke-width="0.16" textLength="35.6" lengthAdjust="spacingAndGlyphs">TrandyNet</text>
<text x="602.06" y="318.47" font-size="7" fill="#1b1b1b" stroke="#1b1b1b" stroke-width="0.16" textLength="28.4" lengthAdjust="spacingAndGlyphs">1234.jpg</text>
<text x="293.0" y="360.67" font-size="7" fill="#1b1b1b" stroke="#1b1b1b" stroke-width="0.16" textLength="23.8" lengthAdjust="spacingAndGlyphs">151113</text>
<text x="287.1" y="371.17" font-size="7" fill="#1b1b1b" stroke="#1b1b1b" stroke-width="0.16" textLength="35.6" lengthAdjust="spacingAndGlyphs" clip-path="url(#gclip)">TrandyNet</text>
<text x="337.48" y="360.67" font-size="7" fill="#1b1b1b" stroke="#1b1b1b" stroke-width="0.16" textLength="23.8" lengthAdjust="spacingAndGlyphs">151113</text>
<text x="331.58" y="371.17" font-size="7" fill="#1b1b1b" stroke="#1b1b1b" stroke-width="0.16" textLength="35.6" lengthAdjust="spacingAndGlyphs" clip-path="url(#gclip)">TrandyNet</text>
<text x="381.96" y="360.67" font-size="7" fill="#1b1b1b" stroke="#1b1b1b" stroke-width="0.16" textLength="23.8" lengthAdjust="spacingAndGlyphs">151113</text>
<text x="376.06" y="371.17" font-size="7" fill="#1b1b1b" stroke="#1b1b1b" stroke-width="0.16" textLength="35.6" lengthAdjust="spacingAndGlyphs" clip-path="url(#gclip)">TrandyNet</text>
<text x="426.44" y="360.67" font-size="7" fill="#1b1b1b" stroke="#1b1b1b" stroke-width="0.16" textLength="23.8" lengthAdjust="spacingAndGlyphs">151113</text>
<text x="420.54" y="371.17" font-size="7" fill="#1b1b1b" stroke="#1b1b1b" stroke-width="0.16" textLength="35.6" lengthAdjust="spacingAndGlyphs" clip-path="url(#gclip)">TrandyNet</text>
<text x="470.92" y="360.67" font-size="7" fill="#1b1b1b" stroke="#1b1b1b" stroke-width="0.16" textLength="23.8" lengthAdjust="spacingAndGlyphs">151113</text>
<text x="465.02" y="371.17" font-size="7" fill="#1b1b1b" stroke="#1b1b1b" stroke-width="0.16" textLength="35.6" lengthAdjust="spacingAndGlyphs" clip-path="url(#gclip)">TrandyNet</text>
<text x="515.4" y="360.67" font-size="7" fill="#1b1b1b" stroke="#1b1b1b" stroke-width="0.16" textLength="23.8" lengthAdjust="spacingAndGlyphs">151113</text>
<text x="509.5" y="371.17" font-size="7" fill="#1b1b1b" stroke="#1b1b1b" stroke-width="0.16" textLength="35.6" lengthAdjust="spacingAndGlyphs" clip-path="url(#gclip)">TrandyNet</text>
<text x="559.88" y="360.67" font-size="7" fill="#1b1b1b" stroke="#1b1b1b" stroke-width="0.16" textLength="23.8" lengthAdjust="spacingAndGlyphs">151113</text>
<text x="553.98" y="371.17" font-size="7" fill="#1b1b1b" stroke="#1b1b1b" stroke-width="0.16" textLength="35.6" lengthAdjust="spacingAndGlyphs" clip-path="url(#gclip)">TrandyNet</text>
<text x="604.36" y="360.67" font-size="7" fill="#1b1b1b" stroke="#1b1b1b" stroke-width="0.16" textLength="23.8" lengthAdjust="spacingAndGlyphs">151113</text>
<text x="598.46" y="371.17" font-size="7" fill="#1b1b1b" stroke="#1b1b1b" stroke-width="0.16" textLength="35.6" lengthAdjust="spacingAndGlyphs" clip-path="url(#gclip)">TrandyNet</text>
<text x="136.3" y="377.02" font-size="7" fill="#3a3f4a" stroke="#3a3f4a" stroke-width="0.12" textLength="38.1" lengthAdjust="spacingAndGlyphs">136 個の項目</text>
<text x="188" y="377.02" font-size="7" fill="#3a3f4a" stroke="#3a3f4a" stroke-width="0.12" textLength="50.8" lengthAdjust="spacingAndGlyphs">2 個の項目を選択</text>
<text x="243.5" y="377.02" font-size="7" fill="#3a3f4a" stroke="#3a3f4a" stroke-width="0.12" textLength="19.3" lengthAdjust="spacingAndGlyphs">143 KB</text>
<text x="276.3" y="377.02" font-size="7" fill="#3a3f4a" stroke="#3a3f4a" stroke-width="0.12" textLength="14.7" lengthAdjust="spacingAndGlyphs">状況:</text>
<text x="305" y="377.02" font-size="7" fill="#3a3f4a" stroke="#3a3f4a" stroke-width="0.12" textLength="13" lengthAdjust="spacingAndGlyphs">共有</text>
<text x="33.8" y="441.1" font-size="7.5" fill="#bdbdbd" stroke="#bdbdbd" stroke-width="0.12" textLength="89.2" lengthAdjust="spacingAndGlyphs">Web と Windows を検索</text>
<text x="733.8" y="440.92" font-size="7" fill="#fff" stroke="#fff" stroke-width="0.12" textLength="13.8" lengthAdjust="spacingAndGlyphs">日本</text>
<text x="766.9" y="435.52" font-size="7" fill="#fff" stroke="#fff" stroke-width="0.12" textLength="15.7" lengthAdjust="spacingAndGlyphs">13:35</text>
<text x="756.9" y="445.52" font-size="7" fill="#fff" stroke="#fff" stroke-width="0.12" textLength="33.8" lengthAdjust="spacingAndGlyphs">2016/01/13</text></svg>
</body>
</html>
